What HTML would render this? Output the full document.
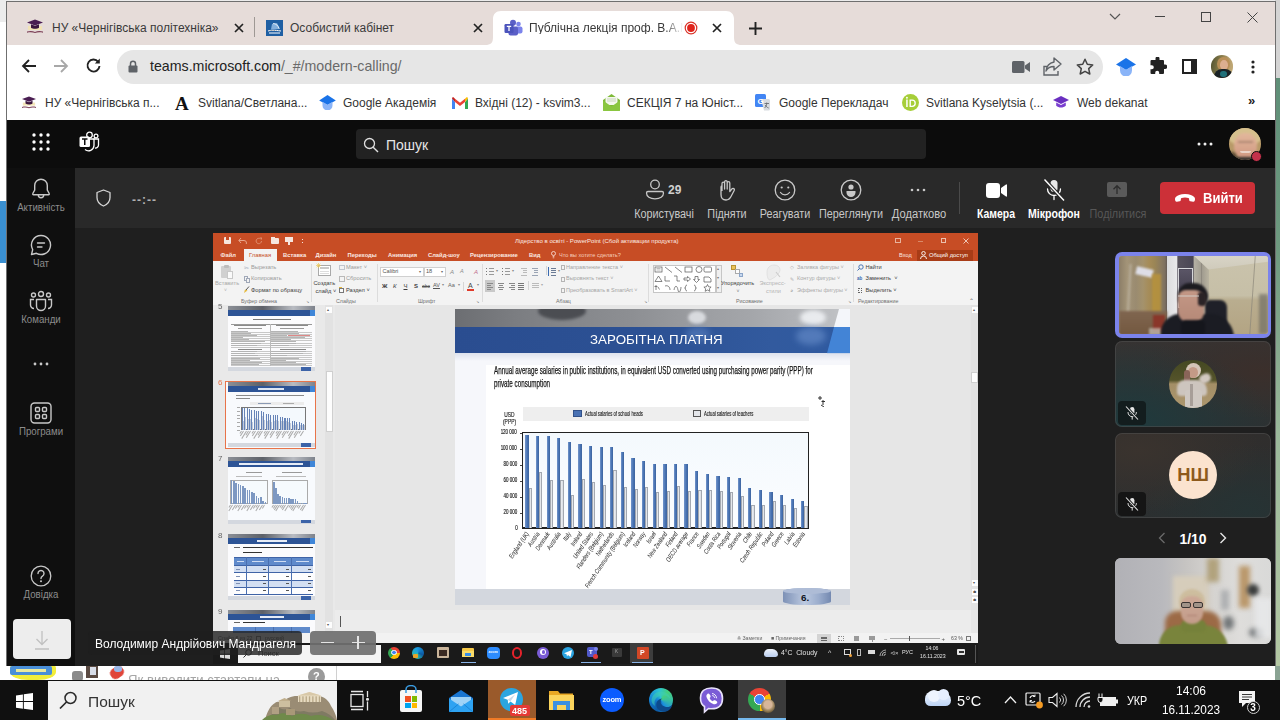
<!DOCTYPE html>
<html><head><meta charset="utf-8">
<style>
*{box-sizing:border-box;margin:0;padding:0}
html,body{width:1280px;height:720px;overflow:hidden;background:#fff;font-family:"Liberation Sans",sans-serif;}
.a{position:absolute}
.t{position:absolute;white-space:nowrap;line-height:1}
#win{left:7px;top:2px;width:1268px;height:664px;background:#fff;overflow:hidden;box-shadow:0 0 0 1px #6f6f6f}
#tabs{left:0;top:0;width:1268px;height:43px;background:#e6dcd9}
#tool{left:0;top:43px;width:1268px;height:40px;background:#fff}
#bm{left:0;top:83px;width:1268px;height:35px;background:#fff;z-index:2}
#teams{left:0;top:117px;width:1268px;height:547px;background:#1f1f1f}
#thead{left:0;top:0;width:1268px;height:49px;background:#0c0c0c}
#rail{left:0;top:49px;width:68px;height:498px;background:#0f0f0f}
#mbar{left:68px;top:49px;width:1200px;height:60px;background:#292929}
#stage{left:68px;top:109px;width:1200px;height:438px;background:#1f1f1f}
#task{left:0;top:680px;width:1280px;height:40px;background:#101010}

.lb{position:absolute;white-space:nowrap;line-height:1;transform:translateX(-50%) scaleX(.9);font-size:12px;color:#c8c8c8}
.rl{position:absolute;white-space:nowrap;line-height:1;transform:translateX(-50%) scaleX(.97);font-size:10px;color:#8c8c8c;left:34px}
</style></head><body>
<!-- desktop edges -->
<div class="a" style="left:0;top:0;width:1280px;height:22px;background:#ececec"></div>
<div class="a" style="left:0;top:201px;width:7px;height:62px;background:#3a8fd0"></div>
<div class="a" style="left:1275px;top:0;width:5px;height:78px;background:#d4d4d4"></div>
<div class="a" style="left:1275px;top:78px;width:5px;height:588px;background:linear-gradient(180deg,#5f8f78 0%,#6f9a80 30%,#9ab89a 60%,#b4c8a4 100%)"></div>

<div id="win" class="a">
  <div id="tabs" class="a">
    <!-- tab 1 -->
    <svg class="a" style="left:19px;top:17px" width="18" height="16" viewBox="0 0 18 16"><path d="M1 3.5 L9 0.5 L17 3.5 L9 6.5Z" fill="#4a1d52"/><path d="M5 5.5v3c2 1.6 6 1.6 8 0v-3l-4 1.6z" fill="#4a1d52"/><rect x="2" y="7" width="14" height="4" fill="#f3e3b0" opacity=".9"/><path d="M5 5.5v3.2c2 1.5 6 1.5 8 0V5.5l-4 1.6z" fill="#3b163f"/><path d="M1 12.5c3-1 6-.6 8 .4 2-1 5-1.4 8-.4v1.2c-3-.8-6-.6-8 .4-2-1-5-1.200-8-.4z" fill="#7a3d55"/></svg>
    <div class="t" style="left:45px;top:20px;font-size:12px;color:#3a3a3a">НУ «Чернігівська політехніка»</div>
    <svg class="a" style="left:227px;top:21px" width="10" height="10" viewBox="0 0 10 10"><path d="M1 1l8 8M9 1l-8 8" stroke="#222" stroke-width="1.7"/></svg>
    <div class="a" style="left:247px;top:15px;width:1px;height:20px;background:#9e9894"></div>
    <!-- tab 2 -->
    <svg class="a" style="left:259px;top:18px" width="17" height="16" viewBox="0 0 17 16"><rect width="17" height="16" fill="#1f5fa3"/><path d="M2 11c3-1 6-1 13 0M3 13h11" stroke="#fff" stroke-width="1"/><path d="M6 4l5-1 3 6-9 .5z" fill="#9cc3ea" opacity=".8"/><path d="M7 3.500c3 0 5 2 6 5" stroke="#fff" stroke-width=".8" fill="none"/></svg>
    <div class="t" style="left:283px;top:20px;font-size:12px;color:#3a3a3a">Особистий кабінет</div>
    <svg class="a" style="left:466px;top:21px" width="10" height="10" viewBox="0 0 10 10"><path d="M1 1l8 8M9 1l-8 8" stroke="#222" stroke-width="1.7"/></svg>
    <!-- active tab -->
    <svg class="a" style="left:478px;top:9px" width="258" height="34" viewBox="0 0 258 34"><path d="M0 34 C6 34 8 32 8 26 L8 8 C8 3 11 0 16 0 L241 0 C246 0 249 3 249 8 L249 26 C249 32 251 34 257 34 Z" fill="#fff"/></svg>
    <svg class="a" style="left:497px;top:17px" width="19" height="18" viewBox="0 0 19 18"><circle cx="14.500" cy="5" r="2.300" fill="#7b83eb"/><rect x="11" y="7.500" width="7.500" height="7" rx="2" fill="#7b83eb"/><circle cx="9" cy="3.800" r="3" fill="#5b5fc7"/><rect x="4.500" y="7.500" width="9.500" height="9" rx="2" fill="#5b5fc7"/><rect x="0.500" y="5" width="9" height="9" rx="1.200" fill="#4b53bc"/><path d="M2.800 7.300h4.400M5 7.300v4.800" stroke="#fff" stroke-width="1.300"/></svg>
    <div class="t" style="left:522px;top:20px;font-size:12px;color:#3a3a3a;width:154px;overflow:hidden;-webkit-mask-image:linear-gradient(90deg,#000 88%,transparent 100%)">Публічна лекція проф. В.А.Мандрагелі</div>
    <svg class="a" style="left:677px;top:19px" width="14" height="14" viewBox="0 0 14 14"><circle cx="7" cy="7" r="5.800" fill="none" stroke="#d93025" stroke-width="1.200"/><circle cx="7" cy="7" r="3.900" fill="#e0241b"/></svg>
    <svg class="a" style="left:705px;top:21px" width="10" height="10" viewBox="0 0 10 10"><path d="M1 1l8 8M9 1l-8 8" stroke="#222" stroke-width="1.700"/></svg>
    <svg class="a" style="left:742px;top:20px" width="13" height="13" viewBox="0 0 13 13"><path d="M6.500 0v13M0 6.500h13" stroke="#222" stroke-width="1.900"/></svg>
    <!-- window controls -->
    <svg class="a" style="left:1102px;top:11px" width="12" height="8" viewBox="0 0 12 8"><path d="M1 1l5 5 5-5" stroke="#555" stroke-width="1.200" fill="none"/></svg>
    <div class="a" style="left:1148px;top:14px;width:10px;height:1px;background:#444"></div>
    <div class="a" style="left:1194px;top:10px;width:10px;height:10px;border:1px solid #444"></div>
    <svg class="a" style="left:1240px;top:10px" width="11" height="11" viewBox="0 0 11 11"><path d="M.5.500l10 10M10.500.500l-10 10" stroke="#444" stroke-width="1"/></svg>
  </div>
  <div id="tool" class="a">
    <svg class="a" style="left:14px;top:13px" width="16" height="16" viewBox="0 0 16 16"><path d="M15 8H2M8 2L2 8l6 6" stroke="#222" stroke-width="1.800" fill="none"/></svg>
    <svg class="a" style="left:46px;top:13px" width="16" height="16" viewBox="0 0 16 16"><path d="M1 8h13M8 2l6 6-6 6" stroke="#a8a8a8" stroke-width="1.800" fill="none"/></svg>
    <svg class="a" style="left:78px;top:12px" width="17" height="17" viewBox="0 0 17 17"><path d="M13.200 4.800A6 6 0 1 0 14.500 9" stroke="#222" stroke-width="1.900" fill="none"/><path d="M14.800 1.500v5h-5z" fill="#222"/></svg>
    <div class="a" style="left:110px;top:5px;width:986px;height:33.500px;border-radius:17px;background:#e6e6e6"></div>
    <svg class="a" style="left:121px;top:15px" width="10" height="13" viewBox="0 0 10 13"><rect x="0.500" y="5.500" width="9" height="7" rx="1" fill="#5f6368"/><path d="M2.500 6V3.800a2.500 2.500 0 0 1 5 0V6" stroke="#5f6368" stroke-width="1.500" fill="none"/></svg>
    <div class="t" style="left:143px;top:14px;font-size:14.200px;color:#222">teams.microsoft.com<span style="color:#6a6a6a">/_#/modern-calling/</span></div>
    <svg class="a" style="left:1005px;top:16px" width="18" height="12" viewBox="0 0 18 12"><rect x="0" y="0" width="12.500" height="12" rx="1.500" fill="#5f6368"/><path d="M13 4.500L18 1v10l-5-3.500z" fill="#5f6368"/></svg>
    <svg class="a" style="left:1036px;top:12px" width="20" height="19" viewBox="0 0 20 19"><path d="M11 1l7 6-7 6V9.500C7 9.500 4.500 11 3 14c.5-5 3-8 8-9z" stroke="#5f6368" stroke-width="1.400" fill="none" stroke-linejoin="round"/><path d="M4 9.500H1V18h14v-4" stroke="#5f6368" stroke-width="1.400" fill="none"/></svg>
    <svg class="a" style="left:1069px;top:13px" width="18" height="17" viewBox="0 0 18 17"><path d="M9 1.300l2.300 5 5.400.6-4 3.700 1.100 5.400L9 13.300 4.200 16l1.100-5.400-4-3.700 5.400-.6z" stroke="#444" stroke-width="1.500" fill="none" stroke-linejoin="round"/></svg>
    <svg class="a" style="left:1109px;top:13px" width="20" height="18" viewBox="0 0 20 18"><path d="M10 0L0 6.500l10 5.500 10-5.500z" fill="#1a73e8"/><path d="M4 8v4.500a6 6 0 0 0 12 0V8l-6 3.800z" fill="#8ab4f8"/></svg>
    <svg class="a" style="left:1141px;top:12px" width="19" height="19" viewBox="0 0 19 19"><path d="M7.500 1.500a2 2 0 0 1 4 0V3H15a1 1 0 0 1 1 1v3.500h1a2 2 0 0 1 0 4.500h-1V16a1 1 0 0 1-1 1h-3.800v-1.300a2 2 0 0 0-4 0V17H3.500a1 1 0 0 1-1-1v-3.700h1.300a2 2 0 0 0 0-4H2.500V4a1 1 0 0 1 1-1h4z" fill="#222"/></svg>
    <div class="a" style="left:1175px;top:14px;width:15px;height:15px;border:2px solid #222;border-right-width:6px"></div>
    <div class="a" style="left:1203.500px;top:10px;width:22.500px;height:22.500px;border-radius:50%;overflow:hidden;background:linear-gradient(100deg,#4f5030 0%,#7d7444 35%,#b59c68 70%,#c4ad7c 100%)">
      <div class="a" style="left:6.500px;top:2px;width:13px;height:14px;border-radius:50%;background:#b98f58;filter:blur(.7px)"></div>
      <div class="a" style="left:9px;top:4.500px;width:8.500px;height:10px;border-radius:50%;background:#dcae90;filter:blur(.6px)"></div>
      <div class="a" style="left:3.500px;top:13.500px;width:19px;height:12px;border-radius:8px 8px 0 0;background:#1a2226;filter:blur(.7px)"></div>
      <div class="a" style="left:9.500px;top:16px;width:7px;height:6px;border-radius:3px;background:#1f7079;filter:blur(.7px)"></div>
    </div>
    <svg class="a" style="left:1244px;top:15px" width="4" height="14" viewBox="0 0 4 14"><circle cx="2" cy="2" r="1.600" fill="#222"/><circle cx="2" cy="7" r="1.600" fill="#222"/><circle cx="2" cy="12" r="1.600" fill="#222"/></svg>
  </div>
  <div id="bm" class="a">
    <svg class="a" style="left:14px;top:11px" width="16" height="14" viewBox="0 0 18 16"><path d="M1 3.500 L9 0.500 L17 3.500 L9 6.500Z" fill="#4a1d52"/><rect x="2" y="7.500" width="14" height="3.500" fill="#f3e3b0" opacity=".9"/><path d="M5 5.500v3.200c2 1.500 6 1.500 8 0V5.500l-4 1.600z" fill="#3b163f"/><path d="M1 12.500c3-1 6-.6 8 .4 2-1 5-1.400 8-.4v1.200c-3-.8-6-.6-8 .4-2-1-5-1.200-8-.4z" fill="#7a3d55"/></svg>
    <div class="t" style="left:38px;top:12px;font-size:12px;color:#333">НУ «Чернігівська п...</div>
    <div class="t" style="left:168px;top:9px;font-family:'Liberation Serif',serif;font-weight:bold;font-size:19px;color:#111">A</div>
    <div class="t" style="left:191px;top:12px;font-size:12px;color:#333">Svitlana/Светлана...</div>
    <svg class="a" style="left:312px;top:10px" width="17" height="15" viewBox="0 0 20 18"><path d="M10 0L0 6.500l10 5.500 10-5.500z" fill="#1a73e8"/><path d="M4 8v4.500a6 6 0 0 0 12 0V8l-6 3.800z" fill="#8ab4f8"/></svg>
    <div class="t" style="left:336px;top:12px;font-size:12px;color:#333">Google Академія</div>
    <svg class="a" style="left:445px;top:12px" width="16" height="12" viewBox="0 0 16 12"><path d="M0 1.500V12h3V5z" fill="#4285f4"/><path d="M16 1.500V12h-3V5z" fill="#34a853"/><path d="M0 1.500L3 5V1.800L1.800.500C1 .1 0 .6 0 1.500z" fill="#c5221f"/><path d="M16 1.500L13 5V1.800L14.200.500c.8-.4 1.800.1 1.800 1z" fill="#fbbc04"/><path d="M3 1.800L8 5.800l5-4V5L8 9 3 5z" fill="#ea4335"/></svg>
    <div class="t" style="left:468px;top:12px;font-size:12px;color:#333">Вхідні (12) - ksvim3...</div>
    <svg class="a" style="left:596px;top:9px" width="17" height="17" viewBox="0 0 17 17"><path d="M0 6l8.500-6L17 6v10a1 1 0 0 1-1 1H1a1 1 0 0 1-1-1z" fill="#7fba3a"/><rect x="2.500" y="3" width="12" height="8" fill="#f4f7ee"/><path d="M0 6.500l8.500 6 8.500-6V16a1 1 0 0 1-1 1H1a1 1 0 0 1-1-1z" fill="#8ac640"/><path d="M4 5h9M4 7h9" stroke="#b9c7a8" stroke-width=".7"/></svg>
    <div class="t" style="left:620px;top:12px;font-size:12px;color:#333">СЕКЦІЯ 7 на Юніст...</div>
    <svg class="a" style="left:748px;top:9px" width="17" height="17" viewBox="0 0 17 17"><rect x="0" y="0" width="11" height="13" rx="1.500" fill="#4285f4"/><path d="M6 5l7.500 0a1.500 1.500 0 0 1 1.500 1.500V15a1.500 1.500 0 0 1-1.500 1.500H9z" fill="#d7dbe0"/><text x="2.500" y="9.500" font-family="Liberation Sans" font-weight="bold" font-size="8" fill="#fff">G</text><path d="M9.500 9.500h4.500M11.700 8.500v1c0 2-1 3.500-2.200 4.500M10.300 11c.6 1.400 1.800 2.500 3.400 3" stroke="#5f6368" stroke-width=".8" fill="none"/></svg>
    <div class="t" style="left:772px;top:12px;font-size:12px;color:#333">Google Перекладач</div>
    <svg class="a" style="left:895px;top:9px" width="17" height="17" viewBox="0 0 17 17"><circle cx="8.500" cy="8.500" r="8.500" fill="#a6ce39"/><rect x="4.200" y="5.500" width="1.500" height="7.500" fill="#fff"/><circle cx="4.950" cy="3.800" r=".95" fill="#fff"/><path d="M7.500 5.500h2.600a3.750 3.750 0 0 1 0 7.500H7.500z M8.900 6.800v4.900h1.200a2.450 2.450 0 0 0 0-4.900z" fill="#fff" fill-rule="evenodd"/></svg>
    <div class="t" style="left:919px;top:12px;font-size:12px;color:#333">Svitlana Kyselytsia (...</div>
    <svg class="a" style="left:1046px;top:11px" width="16" height="13" viewBox="0 0 20 16"><path d="M10 0L0 5l10 5 10-5z" fill="#6a2fc0"/><path d="M4 8v4c3 3 9 3 12 0V8l-6 3z" fill="#7a3fd0"/></svg>
    <div class="t" style="left:1070px;top:12px;font-size:12px;color:#333">Web dekanat</div>
    <div class="t" style="left:1241px;top:9px;font-size:13px;font-weight:bold;color:#222">»</div>
  </div>
  <div id="teams" class="a">
    <div id="thead" class="a">
      <svg class="a" style="left:25px;top:14px" width="18" height="18" viewBox="0 0 18 18" fill="#fff"><circle cx="2" cy="2" r="1.700"/><circle cx="9" cy="2" r="1.700"/><circle cx="16" cy="2" r="1.700"/><circle cx="2" cy="9" r="1.700"/><circle cx="9" cy="9" r="1.700"/><circle cx="16" cy="9" r="1.700"/><circle cx="2" cy="16" r="1.700"/><circle cx="9" cy="16" r="1.700"/><circle cx="16" cy="16" r="1.700"/></svg>
      <svg class="a" style="left:72px;top:12px" width="21" height="21" viewBox="0 0 21 21"><circle cx="17" cy="5" r="1.900" fill="none" stroke="#fff" stroke-width="1.300"/><path d="M14.500 8h5v6a3 3 0 0 1-3.500 3" fill="none" stroke="#fff" stroke-width="1.300"/><circle cx="10.500" cy="4" r="2.800" fill="none" stroke="#fff" stroke-width="1.300"/><path d="M6 18.500a5.500 5.500 0 0 0 9-4V8h-4" fill="none" stroke="#fff" stroke-width="1.300"/><rect x="0.500" y="5.500" width="10.500" height="10.500" rx="1.500" fill="#fff"/><path d="M3 8h5.500M5.750 8v6" stroke="#0c0c0c" stroke-width="1.500"/></svg>
      <div class="a" style="left:349px;top:10px;width:570px;height:30px;border-radius:4px;background:#222"></div>
      <svg class="a" style="left:356px;top:18px" width="16" height="16" viewBox="0 0 16 16"><circle cx="6.500" cy="6.500" r="5" stroke="#e0e0e0" stroke-width="1.300" fill="none"/><path d="M10.200 10.200L15 15" stroke="#e0e0e0" stroke-width="1.400"/></svg>
      <div class="t" style="left:379px;top:19px;font-size:14px;color:#e6e6e6">Пошук</div>
      <svg class="a" style="left:1190px;top:22.500px" width="16" height="4" viewBox="0 0 16 4" fill="#f0f0f0"><circle cx="2" cy="2" r="1.500"/><circle cx="8" cy="2" r="1.500"/><circle cx="14" cy="2" r="1.500"/></svg>
      <div class="a" style="left:1222px;top:9px;width:32px;height:32px;border-radius:50%;overflow:hidden;background:#b89a68">
        <div class="a" style="left:-2px;top:-4px;width:36px;height:22px;border-radius:50%;background:#d6c08e;filter:blur(1.200px)"></div>
        <div class="a" style="left:5px;top:5px;width:23px;height:27px;border-radius:46% 46% 50% 50%;background:linear-gradient(180deg,#e2b79c,#cf9780);filter:blur(1px)"></div>
        <div class="a" style="left:9px;top:13px;width:15px;height:2px;background:#8a6a5a;opacity:.5;filter:blur(.8px)"></div>
        <div class="a" style="left:11px;top:22.500px;width:11px;height:2.500px;border-radius:0 0 6px 6px;background:#f2e4dc;opacity:.75;filter:blur(.6px)"></div>
        <div class="a" style="left:-3px;top:24px;width:11px;height:12px;border-radius:50%;background:#4a3a2c;filter:blur(1.500px)"></div>
        <div class="a" style="left:6px;top:29px;width:20px;height:6px;background:#3a3430;filter:blur(1.200px)"></div>
      </div>
      <div class="a" style="left:1244px;top:32px;width:11px;height:11px;border-radius:50%;background:#c4314b;border:1.500px solid #0c0c0c"></div>
    </div>
    <div id="rail" class="a">
      <svg class="a" style="left:24px;top:10px" width="20" height="22" viewBox="0 0 20 22"><path d="M10 1.200a6.300 6.300 0 0 0-6.300 6.300v4.500L1.800 15.500a.8.800 0 0 0 .7 1.200h15a.8.800 0 0 0 .7-1.200l-1.900-3.500V7.500A6.300 6.300 0 0 0 10 1.200z" fill="none" stroke="#c8c8c8" stroke-width="1.400"/><path d="M7.300 17a2.700 2.700 0 0 0 5.400 0" fill="none" stroke="#c8c8c8" stroke-width="1.400"/></svg>
      <div class="rl" style="top:35px">Активність</div>
      <svg class="a" style="left:23px;top:66px" width="22" height="22" viewBox="0 0 22 22"><path d="M11 1.500a9.500 9.500 0 0 0-8.300 14.100L1.500 20.500l4.900-1.200A9.500 9.500 0 1 0 11 1.500z" fill="none" stroke="#c8c8c8" stroke-width="1.400" stroke-linejoin="round"/><path d="M7.500 9h7M7.500 13h4.500" stroke="#c8c8c8" stroke-width="1.400" stroke-linecap="round"/></svg>
      <div class="rl" style="top:91px">Чат</div>
      <svg class="a" style="left:22px;top:122px" width="24" height="22" viewBox="0 0 24 22" fill="none" stroke="#c8c8c8" stroke-width="1.400"><circle cx="12" cy="4" r="2.500"/><circle cx="4.500" cy="5" r="2"/><circle cx="19.500" cy="5" r="2"/><path d="M7.500 9.500h9v6.500a4.500 4.500 0 0 1-9 0z" stroke-linejoin="round"/><path d="M5 9.500H1.500v5.500a3.500 3.500 0 0 0 3.500 3.500M19 9.500h3.500v5.500a3.500 3.500 0 0 1-3.500 3.500"/></svg>
      <div class="rl" style="top:147px">Команди</div>
      <svg class="a" style="left:26px;top:194px" width="16" height="4" viewBox="0 0 16 4" fill="#c8c8c8"><circle cx="2" cy="2" r="1.400"/><circle cx="8" cy="2" r="1.400"/><circle cx="14" cy="2" r="1.400"/></svg>
      <svg class="a" style="left:23px;top:234px" width="22" height="22" viewBox="0 0 22 22" fill="none" stroke="#c8c8c8" stroke-width="1.400"><rect x="1" y="1" width="20" height="20" rx="3.500"/><rect x="5.500" y="5.500" width="4" height="4" rx="1"/><rect x="12.500" y="5.500" width="4" height="4" rx="1"/><rect x="5.500" y="12.500" width="4" height="4" rx="1"/><rect x="12.500" y="12.500" width="4" height="4" rx="1"/></svg>
      <div class="rl" style="top:259px">Програми</div>
      <svg class="a" style="left:23px;top:397px" width="22" height="22" viewBox="0 0 22 22"><circle cx="11" cy="11" r="9.800" fill="none" stroke="#c8c8c8" stroke-width="1.300"/><path d="M8 8.500a3 3 0 1 1 4.500 2.600c-1 .6-1.500 1.200-1.500 2.400" fill="none" stroke="#c8c8c8" stroke-width="1.400" stroke-linecap="round"/><circle cx="11" cy="16.300" r="1" fill="#c8c8c8"/></svg>
      <div class="rl" style="top:422px">Довідка</div>
      <div class="a" style="left:6px;top:451px;width:58px;height:40px;border-radius:4px;background:#ededed"></div>
      <svg class="a" style="left:26px;top:462px" width="18" height="20" viewBox="0 0 18 20" fill="none" stroke="#c0c0c0" stroke-width="1.300"><path d="M9 1v13M3.500 9L9 14.500 14.500 9M2 19h14"/></svg>
    </div>
    <div id="mbar" class="a">
      <svg class="a" style="left:20.5px;top:21px" width="15" height="18" viewBox="0 0 15 18"><path d="M7.500 1L1 3.500v5c0 4 2.800 7 6.500 8.500 3.700-1.500 6.500-4.500 6.500-8.500v-5z" fill="none" stroke="#d6d6d6" stroke-width="1.300" stroke-linejoin="round"/></svg>
      <div class="t" style="left:57px;top:26px;font-size:12px;font-weight:bold;color:#b0b0b0;letter-spacing:1px">--:--</div>
      <!-- people -->
      <svg class="a" style="left:570px;top:11px" width="20" height="21" viewBox="0 0 20 21" fill="none" stroke="#c8c8c8" stroke-width="1.300"><circle cx="10" cy="5.500" r="4.300"/><path d="M3 12.500h14a1.500 1.500 0 0 1 1.500 1.500c0 3.500-3.500 5.800-8.500 5.800S1.500 17.500 1.500 14A1.500 1.500 0 0 1 3 12.500z"/></svg>
      <div class="t" style="left:593px;top:16px;font-size:12px;font-weight:bold;color:#d0d0d0">29</div>
      <div class="lb" style="left:589px;top:40px">Користувачі</div>
      <!-- hand -->
      <svg class="a" style="left:642px;top:11px" width="20" height="22" viewBox="0 0 20 22" fill="none" stroke="#c8c8c8" stroke-width="1.300" stroke-linejoin="round"><path d="M5 12V4.500a1.300 1.300 0 0 1 2.600 0V10 3a1.300 1.300 0 0 1 2.600 0v7-6a1.300 1.300 0 0 1 2.600 0v8.500l2.200-2.700a1.400 1.400 0 0 1 2.300 1.500L14 17.500c-1 2-2.500 3.500-5 3.500-3 0-5-2.200-5-5.500V8a1.200 1.200 0 0 1 1-1.200"/></svg>
      <div class="lb" style="left:652px;top:40px">Підняти</div>
      <!-- smiley -->
      <svg class="a" style="left:699px;top:11px" width="22" height="22" viewBox="0 0 22 22" fill="none" stroke="#c8c8c8" stroke-width="1.300"><circle cx="11" cy="11" r="9.800"/><circle cx="7.700" cy="8.500" r="1.100" fill="#c8c8c8" stroke="none"/><circle cx="14.300" cy="8.500" r="1.100" fill="#c8c8c8" stroke="none"/><path d="M6.500 13.500a5.500 5.500 0 0 0 9 0" stroke-linecap="round"/></svg>
      <div class="lb" style="left:709.5px;top:40px">Реагувати</div>
      <!-- view -->
      <svg class="a" style="left:764.5px;top:11px" width="22" height="22" viewBox="0 0 22 22"><circle cx="11" cy="11" r="9.800" fill="none" stroke="#c8c8c8" stroke-width="1.300"/><circle cx="11" cy="8" r="2.600" fill="#c8c8c8"/><path d="M6.500 12h9v1.500a4.500 4.500 0 0 1-9 0z" fill="#c8c8c8"/></svg>
      <div class="lb" style="left:775.5px;top:40px">Переглянути</div>
      <!-- more -->
      <svg class="a" style="left:835px;top:19.5px" width="16" height="4" viewBox="0 0 16 4" fill="#c8c8c8"><circle cx="2" cy="2" r="1.300"/><circle cx="8" cy="2" r="1.300"/><circle cx="14" cy="2" r="1.300"/></svg>
      <div class="lb" style="left:843.5px;top:40px;transform:translateX(-50%) scaleX(.93)">Додатково</div>
      <div class="a" style="left:884px;top:14px;width:1px;height:32px;background:#4a4a4a"></div>
      <!-- camera -->
      <svg class="a" style="left:910.5px;top:14.5px" width="21" height="15" viewBox="0 0 21 15"><rect x="0" y="0" width="14" height="15" rx="3" fill="#fff"/><path d="M15 5l5-3.500a.6.600 0 0 1 1 .5v11a.6.600 0 0 1-1 .5L15 10z" fill="#fff"/></svg>
      <div class="lb" style="left:920.5px;top:40px;color:#fff;font-weight:bold;transform:translateX(-50%) scaleX(.87)">Камера</div>
      <!-- mic -->
      <svg class="a" style="left:967px;top:10px" width="24" height="24" viewBox="0 0 24 24" fill="none" stroke="#fff" stroke-width="1.300"><rect x="8.500" y="2" width="7" height="12" rx="3.500" fill="#e8e8e8" stroke="none"/><path d="M5.500 11a6.500 6.500 0 0 0 13 0M12 17.500V21.500" stroke-linecap="round"/><path d="M2.500 1.500l19.500 21" stroke="#292929" stroke-width="3.500"/><path d="M2.500 1.500l19.500 21" stroke-width="1.400"/></svg>
      <div class="lb" style="left:979px;top:40px;color:#fff;font-weight:bold;transform:translateX(-50%) scaleX(.88)">Мікрофон</div>
      <!-- share -->
      <svg class="a" style="left:1032px;top:14px" width="20" height="15" viewBox="0 0 20 15"><rect width="20" height="15" rx="2" fill="#5a5a5a"/><path d="M10 12V4M6.500 7.200L10 3.700l3.500 3.500" stroke="#2c2c2c" stroke-width="1.300" fill="none"/></svg>
      <div class="lb" style="left:1042.5px;top:40px;color:#575757">Поділитися</div>
      <!-- leave -->
      <div class="a" style="left:1085px;top:14px;width:95px;height:32px;border-radius:4px;background:#cc3038"></div>
      <svg class="a" style="left:1099.5px;top:26px" width="20" height="9" viewBox="0 0 20 9"><path d="M10 0C5.500 0 2 1.300.6 3.200c-.8 1-.7 2.400-.3 3.600.2.700.9 1.100 1.600 1l2.600-.5c.7-.1 1.200-.7 1.300-1.400l.2-1.700c2.500-.9 5.500-.9 8 0l.2 1.700c.1.700.6 1.300 1.300 1.400l2.600.5c.7.100 1.400-.3 1.600-1 .4-1.200.5-2.600-.3-3.600C18 1.300 14.500 0 10 0z" fill="#fff"/></svg>
      <div class="t" style="left:1128px;top:23px;font-size:14px;font-weight:bold;color:#fff;transform-origin:0 0;transform:scaleX(.93)">Вийти</div>
    </div>
    <div id="stage" class="a">
<!--PPT-->
<div id="ppt" class="a" style="left:138px;top:5px;width:765px;height:431px;background:#e6e6e6;overflow:hidden">
<div class="a" style="left:0;top:0;width:765px;height:431px;filter:blur(.42px)">
<div class="a" style="left:0px;top:0px;width:765px;height:28px;background:#c74d25;"></div>
<div class="a" style="left:11px;top:4px;width:7px;height:7px;background:#f6e6de;border-radius:1px"></div>
<div class="a" style="left:13px;top:4px;width:3px;height:2.5px;background:#c74d25;"></div>
<svg class="a" style="left:25px;top:4px" width="10" height="7" viewBox="0 0 10 7"><path d="M1 3.500h5a2.500 2.500 0 0 1 0 5M3 1L.8 3.500 3 6" stroke="#e9a58a" fill="none" stroke-width="1"/></svg>
<svg class="a" style="left:42px;top:3.5px" width="8" height="8" viewBox="0 0 8 8"><path d="M6.500 4a2.700 2.700 0 1 1-1-2.100" stroke="#e08d6c" fill="none" stroke-width="1"/><path d="M4.500.500h2.500v2.500z" fill="#e08d6c"/></svg>
<div class="a" style="left:58px;top:5px;width:8px;height:6px;background:#f6e6de;border-radius:1px"></div>
<div class="a" style="left:58px;top:4px;width:4px;height:1.5px;background:#f6e6de;"></div>
<div class="a" style="left:71.5px;top:3.5px;width:8px;height:5px;background:#f6e6de;"></div>
<div class="a" style="left:74.5px;top:8.5px;width:2px;height:3px;background:#f6e6de;"></div>
<div class="a" style="left:89px;top:6px;width:1px;height:1px;background:#f6e6de;"></div>
<div class="a" style="left:89px;top:8.5px;width:1px;height:1px;background:#f6e6de;"></div>
<div class="t" style="left:302px;top:4.86px;font-size:6.05px;color:#fbe9e2;">Лідерство в освіті - PowerPoint (Сбой активации продукта)</div>
<div class="a" style="left:682px;top:5px;width:6px;height:4.5px;background:transparent;border:1px solid #e8b39d"></div>
<div class="a" style="left:705px;top:8px;width:5px;height:1px;background:#d98a6a;"></div>
<div class="a" style="left:728px;top:5px;width:5px;height:5px;background:transparent;border:1px solid #ecc0ad"></div>
<svg class="a" style="left:750px;top:4.5px" width="6" height="6" viewBox="0 0 6 6"><path d="M.5.500l5 5M5.500.500l-5 5" stroke="#efc7b6" stroke-width="1"/></svg>
<div class="a" style="left:31px;top:16px;width:33px;height:12px;background:#f3f3f3;"></div>
<div class="t" style="left:7.5px;top:19.57px;font-size:5.8px;color:#fbe9e2;font-weight:bold">Файл</div>
<div class="t" style="left:36px;top:19.57px;font-size:5.8px;color:#c74d25;">Главная</div>
<div class="t" style="left:70px;top:19.57px;font-size:5.8px;color:#fbe9e2;font-weight:bold">Вставка</div>
<div class="t" style="left:102.5px;top:19.57px;font-size:5.8px;color:#fbe9e2;font-weight:bold">Дизайн</div>
<div class="t" style="left:134.5px;top:19.57px;font-size:5.8px;color:#fbe9e2;font-weight:bold">Переходы</div>
<div class="t" style="left:175px;top:19.57px;font-size:5.8px;color:#fbe9e2;font-weight:bold">Анимация</div>
<div class="t" style="left:215px;top:19.57px;font-size:5.8px;color:#fbe9e2;font-weight:bold">Слайд-шоу</div>
<div class="t" style="left:257px;top:19.57px;font-size:5.8px;color:#fbe9e2;font-weight:bold">Рецензирование</div>
<div class="t" style="left:316px;top:19.57px;font-size:5.8px;color:#fbe9e2;font-weight:bold">Вид</div>
<svg class="a" style="left:338px;top:18px" width="5" height="8" viewBox="0 0 5 8"><circle cx="2.500" cy="2.500" r="2" stroke="#fbe9e2" fill="none" stroke-width=".8"/><path d="M1.700 5.500h1.600M1.700 6.800h1.600" stroke="#fbe9e2" stroke-width=".7"/></svg>
<div class="t" style="left:346px;top:19.67px;font-size:5.6px;color:#f6cdbd;">Что вы хотите сделать?</div>
<div class="t" style="left:686px;top:19.67px;font-size:5.6px;color:#fbe9e2;">Вход</div>
<div class="a" style="left:704px;top:17px;width:56px;height:11px;background:#a83c17;"></div>
<svg class="a" style="left:707px;top:18px" width="7" height="8" viewBox="0 0 7 8"><circle cx="3.500" cy="2.300" r="1.800" stroke="#fff" fill="none" stroke-width=".9"/><path d="M.5 8a3 3 0 0 1 6 0" stroke="#fff" fill="none" stroke-width=".9"/></svg>
<div class="t" style="left:716px;top:19.77px;font-size:5.8px;color:#fff;">Общий доступ</div>
<div class="a" style="left:0px;top:28px;width:765px;height:44px;background:#f3f3f3;"></div>
<div class="a" style="left:0px;top:71.5px;width:765px;height:1px;background:#d8d8d8;"></div>
<div class="a" style="left:8px;top:33px;width:10px;height:12px;background:#d0d0d0;border-radius:1px"></div>
<div class="a" style="left:10.5px;top:31.5px;width:5px;height:3px;background:#bcbcbc;border-radius:1px"></div>
<div class="a" style="left:14px;top:38px;width:6px;height:8px;background:#fafafa;border:.5px solid #c8c8c8"></div>
<div class="t" style="left:2px;top:48.32px;font-size:5.7px;color:#a8a8a8;">Вставить</div>
<div class="t" style="left:11px;top:55.15px;font-size:5px;color:#b0b0b0;">˅</div>
<div class="t" style="left:31px;top:31.68px;font-size:6px;color:#9fa8b8;">✂</div>
<div class="t" style="left:38px;top:31.82px;font-size:5.7px;color:#9a9a9a;">Вырезать</div>
<div class="a" style="left:30.5px;top:43px;width:4px;height:5px;background:transparent;border:.6px solid #a0a8b8"></div>
<div class="a" style="left:32.5px;top:45px;width:4px;height:5px;background:#f3f3f3;border:.6px solid #a0a8b8"></div>
<div class="t" style="left:38px;top:43.32px;font-size:5.7px;color:#9a9a9a;">Копировать</div>
<svg class="a" style="left:30px;top:53px" width="7" height="8" viewBox="0 0 7 8"><path d="M6 .5L3 4" stroke="#555" stroke-width="1"/><path d="M1 7l1-3.500 2.500 1z" fill="#e5b93c"/></svg>
<div class="t" style="left:38px;top:54.62px;font-size:5.7px;color:#3c3c3c;">Формат по образцу</div>
<div class="t" style="left:28px;top:65.71px;font-size:5.3px;color:#707070;">Буфер обмена</div>
<div class="t" style="left:93px;top:66.62px;font-size:4px;color:#888;">↘</div>
<div class="a" style="left:98px;top:31px;width:1px;height:38px;background:#dcdcdc;"></div>
<div class="a" style="left:105px;top:32px;width:13px;height:11px;background:#fff;border:.7px solid #a9a9a9"></div>
<div class="a" style="left:107px;top:34px;width:9px;height:2px;background:#c9c9c9;"></div>
<div class="a" style="left:107px;top:37.5px;width:9px;height:1px;background:#ddd;"></div>
<div class="a" style="left:107px;top:39.5px;width:9px;height:1px;background:#ddd;"></div>
<svg class="a" style="left:103px;top:30px" width="5" height="5" viewBox="0 0 5 5"><path d="M2.500 0v5M0 2.500h5M.7.700l3.600 3.600M4.300.700L.7 4.300" stroke="#e8c55a" stroke-width=".7"/></svg>
<div class="t" style="left:100.5px;top:48.12px;font-size:5.7px;color:#3c3c3c;">Создать</div>
<div class="t" style="left:102.5px;top:56.12px;font-size:5.7px;color:#3c3c3c;">слайд ˅</div>
<div class="a" style="left:125.5px;top:31.5px;width:6px;height:5.5px;background:transparent;border:.5px solid #c0c5ce"></div>
<div class="t" style="left:133px;top:31.62px;font-size:5.7px;color:#9a9a9a;">Макет ˅</div>
<div class="a" style="left:125.5px;top:43px;width:6px;height:5.5px;background:transparent;border:.5px solid #b8b8b8"></div>
<div class="t" style="left:133px;top:43.32px;font-size:5.7px;color:#9a9a9a;">Сбросить</div>
<div class="a" style="left:126px;top:55px;width:5px;height:5px;background:#fafafa;border:.6px solid #777"></div>
<div class="a" style="left:125.5px;top:54px;width:3px;height:1.2px;background:#e5b93c;"></div>
<div class="t" style="left:133px;top:54.62px;font-size:5.7px;color:#3c3c3c;">Раздел ˅</div>
<div class="t" style="left:123px;top:65.71px;font-size:5.3px;color:#707070;">Слайды</div>
<div class="a" style="left:164px;top:31px;width:1px;height:38px;background:#dcdcdc;"></div>
<div class="a" style="left:167px;top:33.5px;width:43.5px;height:10px;background:#fff;border:.5px solid #d0d0d0"></div>
<div class="t" style="left:169.5px;top:36.07px;font-size:5.6px;color:#555;">Calibri</div>
<div class="t" style="left:206px;top:36.62px;font-size:4px;color:#666;">▾</div>
<div class="a" style="left:211px;top:33.5px;width:22px;height:10px;background:#fff;border:.5px solid #d0d0d0"></div>
<div class="t" style="left:213px;top:36.07px;font-size:5.6px;color:#555;">18</div>
<div class="t" style="left:228px;top:36.62px;font-size:4px;color:#666;">▾</div>
<div class="t" style="left:237px;top:35.68px;font-size:6px;color:#888;font-style:italic">A</div>
<div class="t" style="left:247px;top:35.91px;font-size:5.5px;color:#888;font-style:italic">A</div>
<div class="t" style="left:261px;top:35.68px;font-size:6px;color:#c06a8a;font-style:italic">A</div>
<div class="t" style="left:169px;top:50.18px;font-size:6px;color:#3c3c3c;font-weight:bold">Ж</div>
<div class="t" style="left:180px;top:50.18px;font-size:6px;color:#3c3c3c;font-style:italic">К</div>
<div class="t" style="left:190.5px;top:50.18px;font-size:6px;color:#3c3c3c;text-decoration:underline">Ч</div>
<div class="t" style="left:201px;top:50.18px;font-size:6px;color:#3c3c3c;font-weight:bold">S</div>
<div class="t" style="left:209px;top:50.95px;font-size:5px;color:#555;text-decoration:line-through">abc</div>
<div class="t" style="left:220px;top:49.91px;font-size:5.5px;color:#555;text-decoration:underline">AV</div>
<div class="t" style="left:229px;top:51.35px;font-size:3.5px;color:#888;">▾</div>
<div class="t" style="left:235px;top:50.37px;font-size:5.6px;color:#666;">Aa</div>
<div class="t" style="left:245px;top:51.35px;font-size:3.5px;color:#888;">▾</div>
<div class="a" style="left:249.5px;top:49px;width:0.7px;height:9px;background:#d5d5d5;"></div>
<div class="t" style="left:255px;top:49.01px;font-size:7px;color:#444;">A</div>
<div class="a" style="left:253.5px;top:56px;width:7px;height:1.6px;background:#e03a2a;"></div>
<div class="t" style="left:264px;top:51.35px;font-size:3.5px;color:#888;">▾</div>
<div class="t" style="left:205px;top:65.71px;font-size:5.3px;color:#707070;">Шрифт</div>
<div class="t" style="left:263px;top:66.62px;font-size:4px;color:#888;">↘</div>
<div class="a" style="left:269px;top:31px;width:1px;height:38px;background:#dcdcdc;"></div>
<div class="a" style="left:273px;top:35px;width:1.2px;height:1.2px;background:#777;"></div>
<div class="a" style="left:275.5px;top:35.3px;width:5px;height:0.8px;background:#999;"></div>
<div class="a" style="left:273px;top:38px;width:1.2px;height:1.2px;background:#777;"></div>
<div class="a" style="left:275.5px;top:38.3px;width:5px;height:0.8px;background:#999;"></div>
<div class="a" style="left:273px;top:41px;width:1.2px;height:1.2px;background:#777;"></div>
<div class="a" style="left:275.5px;top:41.3px;width:5px;height:0.8px;background:#999;"></div>
<div class="a" style="left:289px;top:35px;width:1.2px;height:1.2px;background:#777;"></div>
<div class="a" style="left:291.5px;top:35.3px;width:5px;height:0.8px;background:#999;"></div>
<div class="a" style="left:289px;top:38px;width:1.2px;height:1.2px;background:#777;"></div>
<div class="a" style="left:291.5px;top:38.3px;width:5px;height:0.8px;background:#999;"></div>
<div class="a" style="left:289px;top:41px;width:1.2px;height:1.2px;background:#777;"></div>
<div class="a" style="left:291.5px;top:41.3px;width:5px;height:0.8px;background:#999;"></div>
<div class="t" style="left:283px;top:36.85px;font-size:3.5px;color:#888;">▾</div>
<div class="t" style="left:299px;top:36.85px;font-size:3.5px;color:#888;">▾</div>
<div class="a" style="left:308px;top:35.0px;width:6px;height:0.8px;background:#bbb;"></div>
<div class="a" style="left:310px;top:37.2px;width:4px;height:0.8px;background:#bbb;"></div>
<div class="a" style="left:310px;top:39.4px;width:4px;height:0.8px;background:#bbb;"></div>
<div class="a" style="left:308px;top:41.6px;width:6px;height:0.8px;background:#bbb;"></div>
<div class="a" style="left:319px;top:35.0px;width:6px;height:0.8px;background:#9aa4b4;"></div>
<div class="a" style="left:321px;top:37.2px;width:4px;height:0.8px;background:#9aa4b4;"></div>
<div class="a" style="left:321px;top:39.4px;width:4px;height:0.8px;background:#9aa4b4;"></div>
<div class="a" style="left:319px;top:41.6px;width:6px;height:0.8px;background:#9aa4b4;"></div>
<div class="a" style="left:332.5px;top:33px;width:0.7px;height:9px;background:#d5d5d5;"></div>
<div class="a" style="left:338px;top:34.5px;width:5px;height:0.9px;background:#6a7a94;"></div>
<div class="a" style="left:338px;top:36.9px;width:5px;height:0.9px;background:#6a7a94;"></div>
<div class="a" style="left:338px;top:39.3px;width:5px;height:0.9px;background:#6a7a94;"></div>
<div class="a" style="left:338px;top:41.7px;width:5px;height:0.9px;background:#6a7a94;"></div>
<div class="a" style="left:334.5px;top:34px;width:1px;height:9px;background:#3a6ab0;"></div>
<div class="t" style="left:345px;top:36.85px;font-size:3.5px;color:#888;">▾</div>
<div class="a" style="left:271.5px;top:47px;width:10.5px;height:12px;background:#c9c9c9;"></div>
<div class="a" style="left:274px;top:49.5px;width:6px;height:0.8px;background:#888;"></div>
<div class="a" style="left:274px;top:51.5px;width:4px;height:0.8px;background:#888;"></div>
<div class="a" style="left:274px;top:53.5px;width:6px;height:0.8px;background:#888;"></div>
<div class="a" style="left:274px;top:55.5px;width:4px;height:0.8px;background:#888;"></div>
<div class="a" style="left:285.0px;top:49.5px;width:6px;height:0.8px;background:#888;"></div>
<div class="a" style="left:286.0px;top:51.5px;width:4px;height:0.8px;background:#888;"></div>
<div class="a" style="left:285.0px;top:53.5px;width:6px;height:0.8px;background:#888;"></div>
<div class="a" style="left:286.0px;top:55.5px;width:4px;height:0.8px;background:#888;"></div>
<div class="a" style="left:295.5px;top:49.5px;width:6px;height:0.8px;background:#888;"></div>
<div class="a" style="left:297.5px;top:51.5px;width:4px;height:0.8px;background:#888;"></div>
<div class="a" style="left:295.5px;top:53.5px;width:6px;height:0.8px;background:#888;"></div>
<div class="a" style="left:297.5px;top:55.5px;width:4px;height:0.8px;background:#888;"></div>
<div class="a" style="left:305px;top:49.5px;width:6px;height:0.8px;background:#777;"></div>
<div class="a" style="left:305px;top:51.5px;width:6px;height:0.8px;background:#777;"></div>
<div class="a" style="left:305px;top:53.5px;width:6px;height:0.8px;background:#777;"></div>
<div class="a" style="left:305px;top:55.5px;width:6px;height:0.8px;background:#777;"></div>
<div class="a" style="left:314.5px;top:48px;width:0.7px;height:9px;background:#d5d5d5;"></div>
<div class="a" style="left:319px;top:50.0px;width:7px;height:0.8px;background:#bbb;"></div>
<div class="a" style="left:319px;top:52.2px;width:7px;height:0.8px;background:#bbb;"></div>
<div class="a" style="left:319px;top:54.4px;width:7px;height:0.8px;background:#bbb;"></div>
<div class="t" style="left:328px;top:51.35px;font-size:3.5px;color:#aaa;">▾</div>
<div class="t" style="left:353px;top:31.91px;font-size:5.5px;color:#a4a4a4;">Направление текста ˅</div>
<div class="a" style="left:348px;top:32px;width:4px;height:5px;background:transparent;border:.5px solid #b5b5b5"></div>
<div class="t" style="left:353px;top:43.41px;font-size:5.5px;color:#a4a4a4;">Выровнять текст ˅</div>
<div class="a" style="left:348px;top:43.5px;width:4px;height:5px;background:transparent;border:.5px solid #b5b5b5"></div>
<div class="t" style="left:353px;top:54.71px;font-size:5.5px;color:#a4a4a4;">Преобразовать в SmartArt ˅</div>
<div class="a" style="left:348px;top:55px;width:4px;height:4.5px;background:transparent;border:.5px solid #b5b5b5"></div>
<div class="t" style="left:343px;top:65.71px;font-size:5.3px;color:#707070;">Абзац</div>
<div class="t" style="left:431px;top:66.62px;font-size:4px;color:#888;">↘</div>
<div class="a" style="left:435px;top:31px;width:1px;height:38px;background:#dcdcdc;"></div>
<div class="a" style="left:439.5px;top:31.5px;width:63px;height:28px;background:#fff;border:.5px solid #c6c6c6"></div>
<div class="a" style="left:502.5px;top:31.5px;width:6px;height:28px;background:#f0f0f0;border:.5px solid #c6c6c6"></div>
<svg class="a" style="left:440px;top:32px" width="62" height="27" viewBox="0 0 62 27" fill="none" stroke="#555" stroke-width=".7"><rect x="2" y="2" width="7" height="5"/><path d="M3.500 3.500h4M3.500 5h4" stroke-width=".4"/><path d="M12 2l7 5.500M22 2l7 5.500"/><rect x="32" y="2" width="7" height="5"/><circle cx="46" cy="4.500" r="3"/><rect x="51" y="2" width="7.500" height="5" rx="1.200"/><path d="M2 16.500l3.500-5.500 3.500 5.500z"/><path d="M12 11v5h5M21 11h3v5h3"/><path d="M31 13h3.500v-1.500l3 2.500-3 2.500v-1.500H31z"/><path d="M42 11.500h3v3h1.500l-3 3-3-3H42z"/><path d="M51 12h5l2 2v3h-7z"/><path d="M3 20v5M1.500 21.500h3M5 22l1.500 2.500"/><path d="M12 21c3-1 5 1 5 4M21 25c1-5 3-5 4 0s3 0 3-3"/><path d="M34 20c-1.500 0-1.500 2-1.500 2.500s-1 .5-1 .5 1 0 1 .5 0 2.500 1.500 2.500M41 20c1.500 0 1.500 2 1.500 2.500s1 .5 1 .5-1 0-1 .5 0 2.500-1.500 2.500"/><path d="M54.500 19.500l1.100 2.300 2.500.3-1.800 1.700.5 2.500-2.300-1.300-2.300 1.300.5-2.500-1.800-1.700 2.500-.3z"/></svg>
<div class="t" style="left:503.5px;top:33.62px;font-size:4px;color:#777;">▴</div>
<div class="t" style="left:503.5px;top:42.62px;font-size:4px;color:#777;">▾</div>
<div class="t" style="left:503.5px;top:52.62px;font-size:4px;color:#777;">▾</div>
<div class="a" style="left:518px;top:32px;width:5px;height:5px;background:#e9c25b;border:.5px solid #b99433"></div>
<div class="a" style="left:521.5px;top:35.5px;width:5.5px;height:5.5px;background:#fdfdfd;border:.5px solid #aaa"></div>
<div class="a" style="left:525.5px;top:39.5px;width:4px;height:4px;background:#c8d8ee;border:.5px solid #8aa4c8"></div>
<div class="t" style="left:508px;top:48.17px;font-size:5.6px;color:#3c3c3c;">Упорядочить</div>
<div class="t" style="left:523.5px;top:55.65px;font-size:5px;color:#777;">˅</div>
<svg class="a" style="left:552px;top:31px" width="17" height="17" viewBox="0 0 17 17"><path d="M2 8c0-4 3-7 7-7s6 2 6 5-3 5-5 7l-5 3c-2 0-3-3-3-8z" fill="#ececec" stroke="#d6d6d6" stroke-width=".6"/><path d="M11 8l4 5" stroke="#ccc" stroke-width="1.200"/></svg>
<div class="t" style="left:546.5px;top:48.17px;font-size:5.6px;color:#b4b4b4;">Экспресс-</div>
<div class="t" style="left:553px;top:55.87px;font-size:5.6px;color:#b4b4b4;">стили</div>
<div class="t" style="left:577px;top:31.95px;font-size:5px;color:#b0b0b0;">◇</div>
<div class="t" style="left:584px;top:31.91px;font-size:5.5px;color:#a9a9a9;">Заливка фигуры ˅</div>
<div class="t" style="left:577px;top:43.65px;font-size:5px;color:#b0b0b0;">✎</div>
<div class="t" style="left:584px;top:43.41px;font-size:5.5px;color:#a9a9a9;">Контур фигуры ˅</div>
<div class="t" style="left:577px;top:54.95px;font-size:5px;color:#b0b0b0;">◕</div>
<div class="t" style="left:584px;top:54.71px;font-size:5.5px;color:#a9a9a9;">Эффекты фигуры ˅</div>
<div class="t" style="left:523px;top:65.71px;font-size:5.3px;color:#707070;">Рисование</div>
<div class="t" style="left:635px;top:66.62px;font-size:4px;color:#888;">↘</div>
<div class="a" style="left:639.5px;top:31px;width:1px;height:38px;background:#dcdcdc;"></div>
<svg class="a" style="left:644px;top:31px" width="7" height="7" viewBox="0 0 7 7"><circle cx="4" cy="3" r="2.200" stroke="#3a6ab0" fill="none" stroke-width=".9"/><path d="M2.500 4.500L.5 6.500" stroke="#3a6ab0" stroke-width="1"/></svg>
<div class="t" style="left:652.5px;top:31.62px;font-size:5.7px;color:#3c3c3c;">Найти</div>
<div class="t" style="left:644px;top:43.88px;font-size:4.5px;color:#3a6ab0;font-weight:bold">ab</div>
<div class="t" style="left:652.5px;top:43.32px;font-size:5.7px;color:#3c3c3c;">Заменить&nbsp;&nbsp;˅</div>
<div class="a" style="left:644.5px;top:54.5px;width:4px;height:5px;background:transparent;border:.6px dotted #666"></div>
<div class="t" style="left:652.5px;top:54.62px;font-size:5.7px;color:#3c3c3c;">Выделить ˅</div>
<div class="t" style="left:645px;top:65.71px;font-size:5.3px;color:#707070;">Редактирование</div>
<div class="t" style="left:756px;top:65.18px;font-size:6px;color:#666;">⌃</div>
<div class="a" style="left:0px;top:72px;width:122px;height:329px;background:#e9e9e9;"></div>
<div class="a" style="left:121.5px;top:72px;width:1px;height:329px;background:#d0d0d0;"></div>
<div class="a" style="left:112px;top:72px;width:8px;height:329px;background:#e2e2e2;"></div>
<div class="a" style="left:113px;top:74px;width:6px;height:6px;background:#fdfdfd;"></div>
<div class="t" style="left:114.2px;top:75.0px;font-size:4px;color:#555;">▴</div>
<div class="a" style="left:112.5px;top:138px;width:7px;height:61px;background:#fdfdfd;border:.5px solid #cfcfcf"></div>
<div class="a" style="left:113px;top:389px;width:6px;height:6px;background:#fdfdfd;"></div>
<div class="t" style="left:114.2px;top:390.0px;font-size:4px;color:#555;">▾</div>
<div class="a" style="left:14.5px;top:72.5px;width:87px;height:65.5px;background:#fbfbfd;"></div>
<div class="a" style="left:14.5px;top:72.5px;width:87px;height:4px;background:linear-gradient(90deg,#8b8f96,#5d6168 40%,#b9bcc2 75%,#7e838c);"></div>
<div class="a" style="left:14.5px;top:76.5px;width:87px;height:6px;background:#2d5496;"></div>
<div class="a" style="left:96.5px;top:76.5px;width:5px;height:6px;background:#3f86d8;"></div>
<div class="a" style="left:39.5px;top:86.0px;width:38px;height:1.3px;background:#777;"></div>
<div class="a" style="left:17.5px;top:90.5px;width:81px;height:0.6px;background:#999;"></div>
<div class="a" style="left:20.5px;top:92.0px;width:32px;height:1px;background:#8a8a8a;"></div>
<div class="a" style="left:62.5px;top:92.0px;width:32px;height:1px;background:#8a8a8a;"></div>
<div class="a" style="left:24.5px;top:94.5px;width:24px;height:1px;background:#999;"></div>
<div class="a" style="left:66.5px;top:94.5px;width:24px;height:1px;background:#999;"></div>
<div class="a" style="left:17.5px;top:99.1px;width:81px;height:0.35px;background:#c8c8c8;"></div>
<div class="a" style="left:18.0px;top:97.5px;width:17.235221796021612px;height:0.8px;background:#b4b4b4;"></div>
<div class="a" style="left:58.0px;top:97.5px;width:27.061501407102845px;height:0.8px;background:#b4b4b4;"></div>
<div class="a" style="left:17.5px;top:101.18px;width:81px;height:0.35px;background:#c8c8c8;"></div>
<div class="a" style="left:18.0px;top:99.58px;width:20.139013664057742px;height:0.8px;background:#b4b4b4;"></div>
<div class="a" style="left:58.0px;top:99.58px;width:28.49408092630867px;height:0.8px;background:#b4b4b4;"></div>
<div class="a" style="left:17.5px;top:103.26px;width:81px;height:0.35px;background:#c8c8c8;"></div>
<div class="a" style="left:18.0px;top:101.66px;width:25.765846690377188px;height:0.8px;background:#b4b4b4;"></div>
<div class="a" style="left:58.0px;top:101.66px;width:15.572692621755515px;height:0.8px;background:#b4b4b4;"></div>
<div class="a" style="left:17.5px;top:105.34px;width:81px;height:0.35px;background:#c8c8c8;"></div>
<div class="a" style="left:18.0px;top:103.74px;width:12.289695814207231px;height:0.8px;background:#b4b4b4;"></div>
<div class="a" style="left:58.0px;top:103.74px;width:34.09925797031504px;height:0.8px;background:#b4b4b4;"></div>
<div class="a" style="left:17.5px;top:107.42px;width:81px;height:0.35px;background:#c8c8c8;"></div>
<div class="a" style="left:18.0px;top:105.82px;width:17.705788315216168px;height:0.8px;background:#b4b4b4;"></div>
<div class="a" style="left:58.0px;top:105.82px;width:19.623943065120713px;height:0.8px;background:#b4b4b4;"></div>
<div class="a" style="left:17.5px;top:109.5px;width:81px;height:0.35px;background:#c8c8c8;"></div>
<div class="a" style="left:18.0px;top:107.9px;width:33.90418638123018px;height:0.8px;background:#b4b4b4;"></div>
<div class="a" style="left:58.0px;top:107.9px;width:25.28632418053875px;height:0.8px;background:#b4b4b4;"></div>
<div class="a" style="left:17.5px;top:111.58px;width:81px;height:0.35px;background:#c8c8c8;"></div>
<div class="a" style="left:18.0px;top:109.98px;width:30.402151928036552px;height:0.8px;background:#b4b4b4;"></div>
<div class="a" style="left:58.0px;top:109.98px;width:25.43247700878404px;height:0.8px;background:#b4b4b4;"></div>
<div class="a" style="left:17.5px;top:113.66px;width:81px;height:0.35px;background:#c8c8c8;"></div>
<div class="a" style="left:18.0px;top:112.06px;width:26.059499091971563px;height:0.8px;background:#b4b4b4;"></div>
<div class="a" style="left:58.0px;top:112.06px;width:17.614794176564573px;height:0.8px;background:#b4b4b4;"></div>
<div class="a" style="left:17.5px;top:117.82px;width:81px;height:0.35px;background:#c8c8c8;"></div>
<div class="a" style="left:24.5px;top:116.22px;width:24px;height:1px;background:#888;"></div>
<div class="a" style="left:66.5px;top:116.22px;width:26px;height:1px;background:#888;"></div>
<div class="a" style="left:17.5px;top:119.9px;width:81px;height:0.35px;background:#c8c8c8;"></div>
<div class="a" style="left:18.0px;top:118.3px;width:25.966934482274148px;height:0.8px;background:#b4b4b4;"></div>
<div class="a" style="left:58.0px;top:118.3px;width:34.83308737143912px;height:0.8px;background:#b4b4b4;"></div>
<div class="a" style="left:17.5px;top:121.98px;width:81px;height:0.35px;background:#c8c8c8;"></div>
<div class="a" style="left:18.0px;top:120.38px;width:23.509986628432628px;height:0.8px;background:#b4b4b4;"></div>
<div class="a" style="left:58.0px;top:120.38px;width:31.790044548835766px;height:0.8px;background:#b4b4b4;"></div>
<div class="a" style="left:17.5px;top:124.06px;width:81px;height:0.35px;background:#c8c8c8;"></div>
<div class="a" style="left:18.0px;top:122.46px;width:26.771052458131038px;height:0.8px;background:#b4b4b4;"></div>
<div class="a" style="left:58.0px;top:122.46px;width:15.536754517447935px;height:0.8px;background:#b4b4b4;"></div>
<div class="a" style="left:17.5px;top:126.14px;width:81px;height:0.35px;background:#c8c8c8;"></div>
<div class="a" style="left:18.0px;top:124.54px;width:28.68106541830998px;height:0.8px;background:#b4b4b4;"></div>
<div class="a" style="left:58.0px;top:124.54px;width:28.18638999035162px;height:0.8px;background:#b4b4b4;"></div>
<div class="a" style="left:17.5px;top:128.22px;width:81px;height:0.35px;background:#c8c8c8;"></div>
<div class="a" style="left:18.0px;top:126.62px;width:18.62788850934567px;height:0.8px;background:#b4b4b4;"></div>
<div class="a" style="left:58.0px;top:126.62px;width:14.744282035274px;height:0.8px;background:#b4b4b4;"></div>
<div class="a" style="left:17.5px;top:130.3px;width:81px;height:0.35px;background:#c8c8c8;"></div>
<div class="a" style="left:18.0px;top:128.7px;width:31.041599213536802px;height:0.8px;background:#b4b4b4;"></div>
<div class="a" style="left:58.0px;top:128.7px;width:25.345978127971204px;height:0.8px;background:#b4b4b4;"></div>
<div class="a" style="left:17.5px;top:132.38px;width:81px;height:0.35px;background:#c8c8c8;"></div>
<div class="a" style="left:18.0px;top:130.78px;width:27.814126329447667px;height:0.8px;background:#b4b4b4;"></div>
<div class="a" style="left:58.0px;top:130.78px;width:35.09150720613156px;height:0.8px;background:#b4b4b4;"></div>
<div class="a" style="left:57.0px;top:90.5px;width:0.4px;height:42px;background:#bbb;"></div>
<div class="a" style="left:74.5px;top:102.0px;width:22px;height:0.8px;background:#d88;"></div>
<div class="a" style="left:14.5px;top:134.0px;width:87px;height:4px;background:#d4d8df;"></div>
<div class="a" style="left:87.5px;top:134.0px;width:10px;height:3.5px;background:#3c63a8;"></div>
<div class="t" style="left:5px;top:70.0px;font-size:8px;color:#666;">5</div>
<div class="a" style="left:12.3px;top:147.5px;width:91px;height:68px;background:#f8fafd;border:1.6px solid #e8744a"></div>
<div class="a" style="left:14.5px;top:149px;width:87px;height:4px;background:linear-gradient(90deg,#8b8f96,#5d6168 40%,#b9bcc2 75%,#7e838c);"></div>
<div class="a" style="left:14.5px;top:153px;width:87px;height:6px;background:#2d5496;"></div>
<div class="a" style="left:96.5px;top:153px;width:5px;height:6px;background:#3f86d8;"></div>
<div class="a" style="left:44.5px;top:155.3px;width:26px;height:1.3px;background:#dfe6f2;"></div>
<div class="a" style="left:22.5px;top:162px;width:68px;height:1px;background:#8a8a8a;"></div>
<div class="a" style="left:22.5px;top:164.8px;width:14px;height:1px;background:#8a8a8a;"></div>
<div class="a" style="left:36.5px;top:168.5px;width:54px;height:3.2px;background:#ececec;"></div>
<div class="a" style="left:44.5px;top:169.6px;width:13px;height:0.9px;background:#8a9ab4;"></div>
<div class="a" style="left:69.5px;top:169.6px;width:11px;height:0.9px;background:#aaa;"></div>
<div class="a" style="left:28.0px;top:174px;width:65px;height:23px;background:#f4f9fd;border:.4px solid #777"></div>
<div class="a" style="left:28.8px;top:175.06px;width:1.05px;height:21.9375px;background:#6684b8;"></div>
<div class="a" style="left:29.85px;top:187.62px;width:0.9px;height:9.375px;background:#c3cbd9;"></div>
<div class="a" style="left:31.17px;top:175.25px;width:1.05px;height:21.75px;background:#6684b8;"></div>
<div class="a" style="left:32.22px;top:183.88px;width:0.9px;height:13.125px;background:#c3cbd9;"></div>
<div class="a" style="left:33.54px;top:175.44px;width:1.05px;height:21.5625px;background:#6684b8;"></div>
<div class="a" style="left:34.59px;top:185.75px;width:0.9px;height:11.25px;background:#c3cbd9;"></div>
<div class="a" style="left:35.91px;top:175.81px;width:1.05px;height:21.1875px;background:#6684b8;"></div>
<div class="a" style="left:36.96px;top:185.56px;width:0.9px;height:11.4375px;background:#c3cbd9;"></div>
<div class="a" style="left:38.28px;top:176.75px;width:1.05px;height:20.25px;background:#6684b8;"></div>
<div class="a" style="left:39.33px;top:189.12px;width:0.9px;height:7.874999999999999px;background:#c3cbd9;"></div>
<div class="a" style="left:40.65px;top:177.31px;width:1.05px;height:19.6875px;background:#6684b8;"></div>
<div class="a" style="left:41.7px;top:185.38px;width:0.9px;height:11.625000000000002px;background:#c3cbd9;"></div>
<div class="a" style="left:43.02px;top:177.69px;width:1.05px;height:19.3125px;background:#6684b8;"></div>
<div class="a" style="left:44.07px;top:186.12px;width:0.9px;height:10.875px;background:#c3cbd9;"></div>
<div class="a" style="left:45.39px;top:177.88px;width:1.05px;height:19.125px;background:#6684b8;"></div>
<div class="a" style="left:46.44px;top:186.88px;width:0.9px;height:10.125px;background:#c3cbd9;"></div>
<div class="a" style="left:47.76px;top:177.88px;width:1.05px;height:19.125px;background:#6684b8;"></div>
<div class="a" style="left:48.81px;top:183.31px;width:0.9px;height:13.687499999999998px;background:#c3cbd9;"></div>
<div class="a" style="left:50.13px;top:179.19px;width:1.05px;height:17.8125px;background:#6684b8;"></div>
<div class="a" style="left:51.18px;top:187.25px;width:0.9px;height:9.75px;background:#c3cbd9;"></div>
<div class="a" style="left:52.5px;top:180.5px;width:1.05px;height:16.5px;background:#6684b8;"></div>
<div class="a" style="left:53.55px;top:187.81px;width:0.9px;height:9.1875px;background:#c3cbd9;"></div>
<div class="a" style="left:54.87px;top:181.25px;width:1.05px;height:15.749999999999998px;background:#6684b8;"></div>
<div class="a" style="left:55.92px;top:187.25px;width:0.9px;height:9.75px;background:#c3cbd9;"></div>
<div class="a" style="left:57.24px;top:181.81px;width:1.05px;height:15.187500000000002px;background:#6684b8;"></div>
<div class="a" style="left:58.29px;top:188.56px;width:0.9px;height:8.4375px;background:#c3cbd9;"></div>
<div class="a" style="left:59.61px;top:182.0px;width:1.05px;height:15.0px;background:#6684b8;"></div>
<div class="a" style="left:60.66px;top:188.19px;width:0.9px;height:8.8125px;background:#c3cbd9;"></div>
<div class="a" style="left:61.98px;top:182.0px;width:1.05px;height:15.0px;background:#6684b8;"></div>
<div class="a" style="left:63.03px;top:187.06px;width:0.9px;height:9.9375px;background:#c3cbd9;"></div>
<div class="a" style="left:64.35px;top:182.0px;width:1.05px;height:15.0px;background:#6684b8;"></div>
<div class="a" style="left:65.4px;top:188.19px;width:0.9px;height:8.8125px;background:#c3cbd9;"></div>
<div class="a" style="left:66.72px;top:183.5px;width:1.05px;height:13.5px;background:#6684b8;"></div>
<div class="a" style="left:67.77px;top:188.0px;width:0.9px;height:9.0px;background:#c3cbd9;"></div>
<div class="a" style="left:69.09px;top:184.25px;width:1.05px;height:12.75px;background:#6684b8;"></div>
<div class="a" style="left:70.14px;top:188.0px;width:0.9px;height:9.0px;background:#c3cbd9;"></div>
<div class="a" style="left:71.46px;top:184.62px;width:1.05px;height:12.375000000000002px;background:#6684b8;"></div>
<div class="a" style="left:72.51px;top:188.19px;width:0.9px;height:8.8125px;background:#c3cbd9;"></div>
<div class="a" style="left:73.83px;top:185.0px;width:1.05px;height:12.0px;background:#6684b8;"></div>
<div class="a" style="left:74.88px;top:188.56px;width:0.9px;height:8.4375px;background:#c3cbd9;"></div>
<div class="a" style="left:76.2px;top:185.19px;width:1.05px;height:11.8125px;background:#6684b8;"></div>
<div class="a" style="left:77.25px;top:189.5px;width:0.9px;height:7.5px;background:#c3cbd9;"></div>
<div class="a" style="left:78.57px;top:187.62px;width:1.05px;height:9.375px;background:#6684b8;"></div>
<div class="a" style="left:79.62px;top:191.56px;width:0.9px;height:5.4375px;background:#c3cbd9;"></div>
<div class="a" style="left:80.94px;top:188.0px;width:1.05px;height:9.0px;background:#6684b8;"></div>
<div class="a" style="left:81.99px;top:191.56px;width:0.9px;height:5.4375px;background:#c3cbd9;"></div>
<div class="a" style="left:83.31px;top:188.56px;width:1.05px;height:8.4375px;background:#6684b8;"></div>
<div class="a" style="left:84.36px;top:190.62px;width:0.9px;height:6.375px;background:#c3cbd9;"></div>
<div class="a" style="left:85.68px;top:189.12px;width:1.05px;height:7.874999999999999px;background:#6684b8;"></div>
<div class="a" style="left:86.73px;top:191.56px;width:0.9px;height:5.4375px;background:#c3cbd9;"></div>
<div class="a" style="left:88.05px;top:190.06px;width:1.05px;height:6.9375px;background:#6684b8;"></div>
<div class="a" style="left:89.1px;top:192.31px;width:0.9px;height:4.6875px;background:#c3cbd9;"></div>
<div class="a" style="left:90.42px;top:190.62px;width:1.05px;height:6.375px;background:#6684b8;"></div>
<div class="a" style="left:91.47px;top:191.75px;width:0.9px;height:5.25px;background:#c3cbd9;"></div>
<div class="a" style="left:24.0px;top:174.0px;width:3px;height:0.7px;background:#aaa;"></div>
<div class="a" style="left:24.0px;top:177.75px;width:3px;height:0.7px;background:#aaa;"></div>
<div class="a" style="left:24.0px;top:181.5px;width:3px;height:0.7px;background:#aaa;"></div>
<div class="a" style="left:24.0px;top:185.25px;width:3px;height:0.7px;background:#aaa;"></div>
<div class="a" style="left:24.0px;top:189.0px;width:3px;height:0.7px;background:#aaa;"></div>
<div class="a" style="left:24.0px;top:192.75px;width:3px;height:0.7px;background:#aaa;"></div>
<div class="a" style="left:24.0px;top:196.5px;width:3px;height:0.7px;background:#aaa;"></div>
<div class="a" style="left:28.0px;top:198px;width:.5px;height:3.0px;background:#aaa;transform-origin:100% 0;transform:rotate(32deg)"></div>
<div class="a" style="left:30.37px;top:198px;width:.5px;height:6.0px;background:#aaa;transform-origin:100% 0;transform:rotate(32deg)"></div>
<div class="a" style="left:32.74px;top:198px;width:.5px;height:9.0px;background:#aaa;transform-origin:100% 0;transform:rotate(32deg)"></div>
<div class="a" style="left:35.11px;top:198px;width:.5px;height:4.5px;background:#aaa;transform-origin:100% 0;transform:rotate(32deg)"></div>
<div class="a" style="left:37.48px;top:198px;width:.5px;height:7.5px;background:#aaa;transform-origin:100% 0;transform:rotate(32deg)"></div>
<div class="a" style="left:39.85px;top:198px;width:.5px;height:3.0px;background:#aaa;transform-origin:100% 0;transform:rotate(32deg)"></div>
<div class="a" style="left:42.22px;top:198px;width:.5px;height:6.0px;background:#aaa;transform-origin:100% 0;transform:rotate(32deg)"></div>
<div class="a" style="left:44.59px;top:198px;width:.5px;height:9.0px;background:#aaa;transform-origin:100% 0;transform:rotate(32deg)"></div>
<div class="a" style="left:46.96px;top:198px;width:.5px;height:4.5px;background:#aaa;transform-origin:100% 0;transform:rotate(32deg)"></div>
<div class="a" style="left:49.33px;top:198px;width:.5px;height:7.5px;background:#aaa;transform-origin:100% 0;transform:rotate(32deg)"></div>
<div class="a" style="left:51.7px;top:198px;width:.5px;height:3.0px;background:#aaa;transform-origin:100% 0;transform:rotate(32deg)"></div>
<div class="a" style="left:54.07px;top:198px;width:.5px;height:6.0px;background:#aaa;transform-origin:100% 0;transform:rotate(32deg)"></div>
<div class="a" style="left:56.44px;top:198px;width:.5px;height:9.0px;background:#aaa;transform-origin:100% 0;transform:rotate(32deg)"></div>
<div class="a" style="left:58.81px;top:198px;width:.5px;height:4.5px;background:#aaa;transform-origin:100% 0;transform:rotate(32deg)"></div>
<div class="a" style="left:61.18px;top:198px;width:.5px;height:7.5px;background:#aaa;transform-origin:100% 0;transform:rotate(32deg)"></div>
<div class="a" style="left:63.55px;top:198px;width:.5px;height:3.0px;background:#aaa;transform-origin:100% 0;transform:rotate(32deg)"></div>
<div class="a" style="left:65.92px;top:198px;width:.5px;height:6.0px;background:#aaa;transform-origin:100% 0;transform:rotate(32deg)"></div>
<div class="a" style="left:68.29px;top:198px;width:.5px;height:9.0px;background:#aaa;transform-origin:100% 0;transform:rotate(32deg)"></div>
<div class="a" style="left:70.66px;top:198px;width:.5px;height:4.5px;background:#aaa;transform-origin:100% 0;transform:rotate(32deg)"></div>
<div class="a" style="left:73.03px;top:198px;width:.5px;height:7.5px;background:#aaa;transform-origin:100% 0;transform:rotate(32deg)"></div>
<div class="a" style="left:75.4px;top:198px;width:.5px;height:3.0px;background:#aaa;transform-origin:100% 0;transform:rotate(32deg)"></div>
<div class="a" style="left:77.77px;top:198px;width:.5px;height:6.0px;background:#aaa;transform-origin:100% 0;transform:rotate(32deg)"></div>
<div class="a" style="left:80.14px;top:198px;width:.5px;height:9.0px;background:#aaa;transform-origin:100% 0;transform:rotate(32deg)"></div>
<div class="a" style="left:82.51px;top:198px;width:.5px;height:4.5px;background:#aaa;transform-origin:100% 0;transform:rotate(32deg)"></div>
<div class="a" style="left:84.88px;top:198px;width:.5px;height:7.5px;background:#aaa;transform-origin:100% 0;transform:rotate(32deg)"></div>
<div class="a" style="left:87.25px;top:198px;width:.5px;height:3.0px;background:#aaa;transform-origin:100% 0;transform:rotate(32deg)"></div>
<div class="a" style="left:89.62px;top:198px;width:.5px;height:6.0px;background:#aaa;transform-origin:100% 0;transform:rotate(32deg)"></div>
<div class="a" style="left:14.5px;top:210px;width:87px;height:4px;background:#d4d8df;"></div>
<div class="a" style="left:87.5px;top:210px;width:10px;height:3.5px;background:#3c63a8;"></div>
<div class="t" style="left:5px;top:145.5px;font-size:8px;color:#e8744a;">6</div>
<div class="a" style="left:14.5px;top:224px;width:87px;height:66.5px;background:#f8fafd;"></div>
<div class="a" style="left:14.5px;top:224px;width:87px;height:4px;background:linear-gradient(90deg,#8b8f96,#5d6168 40%,#b9bcc2 75%,#7e838c);"></div>
<div class="a" style="left:14.5px;top:228px;width:87px;height:6px;background:#2d5496;"></div>
<div class="a" style="left:96.5px;top:228px;width:5px;height:6px;background:#3f86d8;"></div>
<div class="a" style="left:25.5px;top:230px;width:64px;height:1.8px;background:#e6ecf6;"></div>
<div class="a" style="left:32.5px;top:238.5px;width:16px;height:1px;background:#999;"></div>
<div class="a" style="left:68.5px;top:238.5px;width:20px;height:1px;background:#999;"></div>
<div class="a" style="left:22.5px;top:242.5px;width:26px;height:0.8px;background:#bbb;"></div>
<div class="a" style="left:62.5px;top:242.5px;width:30px;height:0.8px;background:#bbb;"></div>
<div class="a" style="left:16.5px;top:246.5px;width:38px;height:24.5px;background:#f6fafd;border:.4px solid #aaa"></div>
<div class="a" style="left:59.0px;top:246.5px;width:36px;height:24.5px;background:#f6fafd;border:.4px solid #aaa"></div>
<div class="a" style="left:17.8px;top:247.48px;width:1.5px;height:23.52px;background:#7d98c2;"></div>
<div class="a" style="left:20.05px;top:248.46px;width:1.5px;height:22.54px;background:#7d98c2;"></div>
<div class="a" style="left:22.3px;top:249.93px;width:1.5px;height:21.07px;background:#7d98c2;"></div>
<div class="a" style="left:24.55px;top:251.4px;width:1.5px;height:19.6px;background:#7d98c2;"></div>
<div class="a" style="left:26.8px;top:252.38px;width:1.5px;height:18.62px;background:#7d98c2;"></div>
<div class="a" style="left:29.05px;top:252.87px;width:1.5px;height:18.13px;background:#7d98c2;"></div>
<div class="a" style="left:31.3px;top:255.32px;width:1.5px;height:15.68px;background:#7d98c2;"></div>
<div class="a" style="left:33.55px;top:256.79px;width:1.5px;height:14.209999999999999px;background:#7d98c2;"></div>
<div class="a" style="left:35.8px;top:257.28px;width:1.5px;height:13.719999999999999px;background:#7d98c2;"></div>
<div class="a" style="left:38.05px;top:258.75px;width:1.5px;height:12.25px;background:#7d98c2;"></div>
<div class="a" style="left:40.3px;top:260.22px;width:1.5px;height:10.78px;background:#7d98c2;"></div>
<div class="a" style="left:42.55px;top:263.16px;width:1.5px;height:7.84px;background:#7d98c2;"></div>
<div class="a" style="left:44.8px;top:264.63px;width:1.5px;height:6.37px;background:#7d98c2;"></div>
<div class="a" style="left:47.05px;top:263.65px;width:1.5px;height:7.35px;background:#7d98c2;"></div>
<div class="a" style="left:49.3px;top:268.06px;width:1.5px;height:2.94px;background:#7d98c2;"></div>
<div class="a" style="left:51.55px;top:268.55px;width:1.5px;height:2.45px;background:#7d98c2;"></div>
<div class="a" style="left:60.0px;top:249.44px;width:1.5px;height:21.56px;background:#7d98c2;"></div>
<div class="a" style="left:62.15px;top:255.32px;width:1.5px;height:15.68px;background:#7d98c2;"></div>
<div class="a" style="left:64.3px;top:261.2px;width:1.5px;height:9.8px;background:#7d98c2;"></div>
<div class="a" style="left:66.45px;top:262.67px;width:1.5px;height:8.33px;background:#7d98c2;"></div>
<div class="a" style="left:68.6px;top:264.14px;width:1.5px;height:6.859999999999999px;background:#7d98c2;"></div>
<div class="a" style="left:70.75px;top:264.63px;width:1.5px;height:6.37px;background:#7d98c2;"></div>
<div class="a" style="left:72.9px;top:265.12px;width:1.5px;height:5.88px;background:#7d98c2;"></div>
<div class="a" style="left:75.05px;top:265.12px;width:1.5px;height:5.88px;background:#7d98c2;"></div>
<div class="a" style="left:77.2px;top:265.61px;width:1.5px;height:5.39px;background:#7d98c2;"></div>
<div class="a" style="left:79.35px;top:265.61px;width:1.5px;height:5.39px;background:#7d98c2;"></div>
<div class="a" style="left:81.5px;top:266.1px;width:1.5px;height:4.9px;background:#7d98c2;"></div>
<div class="a" style="left:83.65px;top:268.06px;width:1.5px;height:2.94px;background:#7d98c2;"></div>
<div class="a" style="left:85.8px;top:269.53px;width:1.5px;height:1.47px;background:#7d98c2;"></div>
<div class="a" style="left:87.95px;top:270.02px;width:1.5px;height:0.98px;background:#7d98c2;"></div>
<div class="a" style="left:90.1px;top:270.02px;width:1.5px;height:0.98px;background:#7d98c2;"></div>
<div class="a" style="left:92.25px;top:270.22px;width:1.5px;height:0.784px;background:#7d98c2;"></div>
<div class="a" style="left:17.0px;top:272px;width:.5px;height:3.0px;background:#aaa;transform-origin:100% 0;transform:rotate(32deg)"></div>
<div class="a" style="left:59.5px;top:272px;width:.5px;height:3.0px;background:#aaa;transform-origin:100% 0;transform:rotate(32deg)"></div>
<div class="a" style="left:19.25px;top:272px;width:.5px;height:6.9px;background:#aaa;transform-origin:100% 0;transform:rotate(32deg)"></div>
<div class="a" style="left:61.65px;top:272px;width:.5px;height:4.3px;background:#aaa;transform-origin:100% 0;transform:rotate(32deg)"></div>
<div class="a" style="left:21.5px;top:272px;width:.5px;height:5.6px;background:#aaa;transform-origin:100% 0;transform:rotate(32deg)"></div>
<div class="a" style="left:63.8px;top:272px;width:.5px;height:5.6px;background:#aaa;transform-origin:100% 0;transform:rotate(32deg)"></div>
<div class="a" style="left:23.75px;top:272px;width:.5px;height:4.3px;background:#aaa;transform-origin:100% 0;transform:rotate(32deg)"></div>
<div class="a" style="left:65.95px;top:272px;width:.5px;height:6.9px;background:#aaa;transform-origin:100% 0;transform:rotate(32deg)"></div>
<div class="a" style="left:26.0px;top:272px;width:.5px;height:3.0px;background:#aaa;transform-origin:100% 0;transform:rotate(32deg)"></div>
<div class="a" style="left:68.1px;top:272px;width:.5px;height:3.0px;background:#aaa;transform-origin:100% 0;transform:rotate(32deg)"></div>
<div class="a" style="left:28.25px;top:272px;width:.5px;height:6.9px;background:#aaa;transform-origin:100% 0;transform:rotate(32deg)"></div>
<div class="a" style="left:70.25px;top:272px;width:.5px;height:4.3px;background:#aaa;transform-origin:100% 0;transform:rotate(32deg)"></div>
<div class="a" style="left:30.5px;top:272px;width:.5px;height:5.6px;background:#aaa;transform-origin:100% 0;transform:rotate(32deg)"></div>
<div class="a" style="left:72.4px;top:272px;width:.5px;height:5.6px;background:#aaa;transform-origin:100% 0;transform:rotate(32deg)"></div>
<div class="a" style="left:32.75px;top:272px;width:.5px;height:4.3px;background:#aaa;transform-origin:100% 0;transform:rotate(32deg)"></div>
<div class="a" style="left:74.55px;top:272px;width:.5px;height:6.9px;background:#aaa;transform-origin:100% 0;transform:rotate(32deg)"></div>
<div class="a" style="left:35.0px;top:272px;width:.5px;height:3.0px;background:#aaa;transform-origin:100% 0;transform:rotate(32deg)"></div>
<div class="a" style="left:76.7px;top:272px;width:.5px;height:3.0px;background:#aaa;transform-origin:100% 0;transform:rotate(32deg)"></div>
<div class="a" style="left:37.25px;top:272px;width:.5px;height:6.9px;background:#aaa;transform-origin:100% 0;transform:rotate(32deg)"></div>
<div class="a" style="left:78.85px;top:272px;width:.5px;height:4.3px;background:#aaa;transform-origin:100% 0;transform:rotate(32deg)"></div>
<div class="a" style="left:39.5px;top:272px;width:.5px;height:5.6px;background:#aaa;transform-origin:100% 0;transform:rotate(32deg)"></div>
<div class="a" style="left:81.0px;top:272px;width:.5px;height:5.6px;background:#aaa;transform-origin:100% 0;transform:rotate(32deg)"></div>
<div class="a" style="left:41.75px;top:272px;width:.5px;height:4.3px;background:#aaa;transform-origin:100% 0;transform:rotate(32deg)"></div>
<div class="a" style="left:83.15px;top:272px;width:.5px;height:6.9px;background:#aaa;transform-origin:100% 0;transform:rotate(32deg)"></div>
<div class="a" style="left:44.0px;top:272px;width:.5px;height:3.0px;background:#aaa;transform-origin:100% 0;transform:rotate(32deg)"></div>
<div class="a" style="left:85.3px;top:272px;width:.5px;height:3.0px;background:#aaa;transform-origin:100% 0;transform:rotate(32deg)"></div>
<div class="a" style="left:46.25px;top:272px;width:.5px;height:6.9px;background:#aaa;transform-origin:100% 0;transform:rotate(32deg)"></div>
<div class="a" style="left:87.45px;top:272px;width:.5px;height:4.3px;background:#aaa;transform-origin:100% 0;transform:rotate(32deg)"></div>
<div class="a" style="left:48.5px;top:272px;width:.5px;height:5.6px;background:#aaa;transform-origin:100% 0;transform:rotate(32deg)"></div>
<div class="a" style="left:89.6px;top:272px;width:.5px;height:5.6px;background:#aaa;transform-origin:100% 0;transform:rotate(32deg)"></div>
<div class="a" style="left:50.75px;top:272px;width:.5px;height:4.3px;background:#aaa;transform-origin:100% 0;transform:rotate(32deg)"></div>
<div class="a" style="left:91.75px;top:272px;width:.5px;height:6.9px;background:#aaa;transform-origin:100% 0;transform:rotate(32deg)"></div>
<div class="a" style="left:14.5px;top:286.5px;width:87px;height:4px;background:#d4d8df;"></div>
<div class="a" style="left:87.5px;top:286.5px;width:10px;height:3.5px;background:#3c63a8;"></div>
<div class="t" style="left:5px;top:222.0px;font-size:8px;color:#666;">7</div>
<div class="a" style="left:14.5px;top:301px;width:87px;height:66px;background:#fbfbfd;"></div>
<div class="a" style="left:14.5px;top:301px;width:87px;height:4px;background:linear-gradient(90deg,#8b8f96,#5d6168 40%,#b9bcc2 75%,#7e838c);"></div>
<div class="a" style="left:14.5px;top:305px;width:87px;height:6px;background:#2d5496;"></div>
<div class="a" style="left:96.5px;top:305px;width:5px;height:6px;background:#3f86d8;"></div>
<div class="a" style="left:43.5px;top:306.8px;width:30px;height:1.8px;background:#e6ecf6;"></div>
<div class="a" style="left:20.5px;top:314px;width:6px;height:1.1px;background:#666;"></div>
<div class="a" style="left:29.5px;top:314px;width:70px;height:1.3px;background:#333;"></div>
<div class="a" style="left:29.5px;top:318.8px;width:19px;height:1.3px;background:#333;"></div>
<div class="a" style="left:20.8px;top:324.3px;width:79.5px;height:8.2px;background:#5f8acb;"></div>
<div class="a" style="left:20.8px;top:332.5px;width:79.5px;height:7.2px;background:#d3dff2;"></div>
<div class="a" style="left:20.8px;top:332.2px;width:79.5px;height:0.6px;background:#3f63a6;"></div>
<div class="a" style="left:20.8px;top:339.7px;width:79.5px;height:7.2px;background:#fdfdfe;"></div>
<div class="a" style="left:20.8px;top:339.4px;width:79.5px;height:0.6px;background:#3f63a6;"></div>
<div class="a" style="left:20.8px;top:346.9px;width:79.5px;height:7.2px;background:#d3dff2;"></div>
<div class="a" style="left:20.8px;top:346.6px;width:79.5px;height:0.6px;background:#3f63a6;"></div>
<div class="a" style="left:20.8px;top:354.1px;width:79.5px;height:7.2px;background:#fdfdfe;"></div>
<div class="a" style="left:20.8px;top:353.8px;width:79.5px;height:0.6px;background:#3f63a6;"></div>
<div class="a" style="left:20.8px;top:361.0px;width:79.5px;height:0.8px;background:#3f63a6;"></div>
<div class="a" style="left:20.8px;top:324.0px;width:79.5px;height:0.6px;background:#3f63a6;"></div>
<div class="a" style="left:32.75px;top:324.3px;width:0.5px;height:37px;background:#4a6fb0;"></div>
<div class="a" style="left:55.15px;top:324.3px;width:0.5px;height:37px;background:#4a6fb0;"></div>
<div class="a" style="left:77.55px;top:324.3px;width:0.5px;height:37px;background:#4a6fb0;"></div>
<div class="a" style="left:23.85px;top:327.8px;width:6.71px;height:1.2px;background:#cfdcf2;"></div>
<div class="a" style="left:38.6px;top:327.8px;width:12.320000000000002px;height:1.2px;background:#cfdcf2;"></div>
<div class="a" style="left:61.0px;top:327.8px;width:12.32px;height:1.2px;background:#cfdcf2;"></div>
<div class="a" style="left:83.43px;top:327.8px;width:12.375000000000002px;height:1.2px;background:#cfdcf2;"></div>
<div class="a" style="left:23.3px;top:335.5px;width:3.5px;height:1.2px;background:#7d8fb4;"></div>
<div class="a" style="left:50.4px;top:335.5px;width:3px;height:1.2px;background:#555;"></div>
<div class="a" style="left:72.8px;top:335.5px;width:3px;height:1.2px;background:#555;"></div>
<div class="a" style="left:95.3px;top:335.5px;width:3px;height:1.2px;background:#555;"></div>
<div class="a" style="left:23.3px;top:342.7px;width:3.5px;height:1.2px;background:#7d8fb4;"></div>
<div class="a" style="left:50.4px;top:342.7px;width:3px;height:1.2px;background:#555;"></div>
<div class="a" style="left:72.8px;top:342.7px;width:3px;height:1.2px;background:#555;"></div>
<div class="a" style="left:95.3px;top:342.7px;width:3px;height:1.2px;background:#555;"></div>
<div class="a" style="left:23.3px;top:349.9px;width:3.5px;height:1.2px;background:#7d8fb4;"></div>
<div class="a" style="left:50.4px;top:349.9px;width:3px;height:1.2px;background:#555;"></div>
<div class="a" style="left:72.8px;top:349.9px;width:3px;height:1.2px;background:#555;"></div>
<div class="a" style="left:95.3px;top:349.9px;width:3px;height:1.2px;background:#555;"></div>
<div class="a" style="left:23.3px;top:357.1px;width:3.5px;height:1.2px;background:#7d8fb4;"></div>
<div class="a" style="left:50.4px;top:357.1px;width:3px;height:1.2px;background:#555;"></div>
<div class="a" style="left:72.8px;top:357.1px;width:3px;height:1.2px;background:#555;"></div>
<div class="a" style="left:95.3px;top:357.1px;width:3px;height:1.2px;background:#555;"></div>
<div class="a" style="left:14.5px;top:363px;width:87px;height:4px;background:#d4d8df;"></div>
<div class="a" style="left:87.5px;top:363px;width:10px;height:3.5px;background:#3c63a8;"></div>
<div class="t" style="left:5px;top:299.0px;font-size:8px;color:#666;">8</div>
<div class="a" style="left:14.5px;top:377px;width:87px;height:24px;background:#fbfbfd;"></div>
<div class="a" style="left:14.5px;top:377px;width:87px;height:4px;background:linear-gradient(90deg,#8b8f96,#5d6168 40%,#b9bcc2 75%,#7e838c);"></div>
<div class="a" style="left:14.5px;top:381px;width:87px;height:6px;background:#2d5496;"></div>
<div class="a" style="left:96.5px;top:381px;width:5px;height:6px;background:#3f86d8;"></div>
<div class="a" style="left:46.5px;top:382.8px;width:24px;height:1.8px;background:#e6ecf6;"></div>
<div class="a" style="left:20.5px;top:388.5px;width:6px;height:1.1px;background:#666;"></div>
<div class="a" style="left:29.5px;top:388.5px;width:22px;height:1.3px;background:#333;"></div>
<div class="a" style="left:19.5px;top:394px;width:77px;height:7px;background:#5f8acb;"></div>
<div class="a" style="left:41.5px;top:394px;width:0.5px;height:7px;background:#4a6fb0;"></div>
<div class="a" style="left:59.5px;top:394px;width:0.5px;height:7px;background:#4a6fb0;"></div>
<div class="a" style="left:77.5px;top:394px;width:0.5px;height:7px;background:#4a6fb0;"></div>
<div class="t" style="left:5px;top:375.0px;font-size:8px;color:#666;">9</div>
<div class="a" style="left:122px;top:72px;width:643px;height:329px;background:#e6e6e6;"></div>
<div class="a" style="left:758px;top:72px;width:7px;height:304.5px;background:#e2e2e2;"></div>
<div class="a" style="left:758.5px;top:74px;width:6px;height:6px;background:#fdfdfd;"></div>
<div class="t" style="left:759.5px;top:75.0px;font-size:4px;color:#555;">▴</div>
<div class="a" style="left:758px;top:139px;width:6.5px;height:11px;background:#fdfdfd;border:.5px solid #cfcfcf"></div>
<div class="a" style="left:758.5px;top:347px;width:6px;height:6px;background:#fdfdfd;"></div>
<div class="t" style="left:759.5px;top:348.0px;font-size:4px;color:#555;">▾</div>
<div class="a" style="left:758.5px;top:355.5px;width:6px;height:6px;background:#fdfdfd;"></div>
<div class="a" style="left:758.5px;top:364px;width:6px;height:6px;background:#fdfdfd;"></div>
<div class="t" style="left:759.7px;top:356.5px;font-size:4px;color:#555;">≑</div>
<div class="t" style="left:759.7px;top:365.0px;font-size:4px;color:#555;">≑</div>
<div class="a" style="left:122px;top:376.5px;width:636px;height:0.8px;background:#cfcfcf;"></div>
<div class="a" style="left:122px;top:377.3px;width:636px;height:23px;background:#ececec;"></div>
<div class="a" style="left:126.5px;top:383px;width:0.9px;height:11px;background:#555;"></div>
<div class="a" style="left:242.3px;top:76.3px;width:394.5px;height:296px;background:#f6f7fb;"></div>
<div class="a" style="left:242.3px;top:76.3px;width:394.5px;height:18px;overflow:hidden;background:linear-gradient(90deg,#6c6e72 0%,#7b7d81 15%,#85878b 30%,#8d8f93 45%,#9a9ca0 60%,#a4a6aa 75%,#b4b6ba 90%,#c4c6c9 100%)"><div class="a" style="left:82.69999999999999px;top:-7px;width:48px;height:18px;border-radius:50%;background:#4b4d52;filter:blur(1.800px)"></div><div class="a" style="left:232.7px;top:2px;width:18px;height:13px;border-radius:50%;background:#dfe1e5;filter:blur(1.800px);opacity:.9"></div><div class="a" style="left:344.7px;top:1px;width:26px;height:15px;border-radius:50%;background:#eceef1;filter:blur(2px);opacity:.95"></div></div>
<div class="a" style="left:242.3px;top:94px;width:394.5px;height:26.3px;background:linear-gradient(90deg,#2a4d90 0%,#2c5194 50%,#325a9e 80%,#2f5aa0 100%);"></div>
<div class="a" style="left:473px;top:94px;width:24px;height:14px;border-radius:50%;background:#5f86c4;filter:blur(3px);opacity:.55"></div>
<div class="a" style="left:583px;top:94px;width:30px;height:18px;border-radius:50%;background:#6a90cc;filter:blur(3px);opacity:.6"></div>
<svg class="a" style="left:611px;top:76.3px" width="26" height="44.300" viewBox="0 0 26 44.300"><path d="M15 0h11v18h-16z" fill="#f4f6fa"/><path d="M10 18h16v26.300H3z" fill="#4384d6"/></svg>
<div class="t" style="left:377px;top:100.35px;font-size:13.3px;color:#fff;letter-spacing:.05px">ЗАРОБІТНА ПЛАТНЯ</div>
<div class="a" style="left:242.3px;top:120.3px;width:394.5px;height:8px;background:linear-gradient(180deg,rgba(200,208,225,.55),rgba(243,245,250,0));"></div>
<div class="a" style="left:273px;top:132px;width:363.5px;height:223.5px;background:#fff;"></div>
<div class="t" style="left:280.5px;top:130.8px;font-size:10.500px;color:#151515;-webkit-text-stroke:.25px #151515;transform-origin:0 0;transform:scaleX(.597);line-height:12.800px;white-space:nowrap">Annual average salaries in public institutions, in equivalent USD converted using purchasing power parity (PPP) for<br>private consumption</div>
<div class="a" style="left:309.5px;top:173.5px;width:286px;height:14px;background:#eeeeee;"></div>
<div class="a" style="left:360px;top:177px;width:8.5px;height:6.5px;background:#4a72b4;border:.5px solid #33528a"></div>
<div class="t" style="left:372px;top:177px;font-size:7px;color:#1a1a1a;-webkit-text-stroke:.15px #222;transform-origin:0 0;transform:scaleX(.60)">Actual salaries of school heads</div>
<div class="a" style="left:479.5px;top:177px;width:8.5px;height:6.5px;background:#e4e6ea;border:.6px solid #555"></div>
<div class="t" style="left:491px;top:177px;font-size:7px;color:#1a1a1a;-webkit-text-stroke:.15px #222;transform-origin:0 0;transform:scaleX(.60)">Actual salaries of teachers</div>
<div class="t" style="left:290px;top:177.5px;font-size:6.500px;color:#1a1a1a;-webkit-text-stroke:.15px #222;transform-origin:0 0;transform:scaleX(.75);line-height:7.800px;text-align:center">USD<br>(PPP)</div>
<div class="a" style="left:309px;top:199.3px;width:287px;height:96px;background:linear-gradient(180deg,#f4f9fd,#fbfdff);border:.8px solid #222"></div>
<div class="t" style="right:460.7px;top:196.0px;font-size:6.600px;color:#111;-webkit-text-stroke:.15px #111;transform-origin:100% 0;transform:scaleX(.68)">120 000</div>
<div class="a" style="left:306.8px;top:199.6px;width:2.2px;height:0.6px;background:#444;"></div>
<div class="t" style="right:460.7px;top:212.0px;font-size:6.600px;color:#111;-webkit-text-stroke:.15px #111;transform-origin:100% 0;transform:scaleX(.68)">100 000</div>
<div class="a" style="left:306.8px;top:215.6px;width:2.2px;height:0.6px;background:#444;"></div>
<div class="t" style="right:460.7px;top:228.0px;font-size:6.600px;color:#111;-webkit-text-stroke:.15px #111;transform-origin:100% 0;transform:scaleX(.68)">80 000</div>
<div class="a" style="left:306.8px;top:231.6px;width:2.2px;height:0.6px;background:#444;"></div>
<div class="t" style="right:460.7px;top:244.0px;font-size:6.600px;color:#111;-webkit-text-stroke:.15px #111;transform-origin:100% 0;transform:scaleX(.68)">60 000</div>
<div class="a" style="left:306.8px;top:247.6px;width:2.2px;height:0.6px;background:#444;"></div>
<div class="t" style="right:460.7px;top:260.0px;font-size:6.600px;color:#111;-webkit-text-stroke:.15px #111;transform-origin:100% 0;transform:scaleX(.68)">40 000</div>
<div class="a" style="left:306.8px;top:263.6px;width:2.2px;height:0.6px;background:#444;"></div>
<div class="t" style="right:460.7px;top:276.0px;font-size:6.600px;color:#111;-webkit-text-stroke:.15px #111;transform-origin:100% 0;transform:scaleX(.68)">20 000</div>
<div class="a" style="left:306.8px;top:279.6px;width:2.2px;height:0.6px;background:#444;"></div>
<div class="t" style="right:460.7px;top:292.0px;font-size:6.600px;color:#111;-webkit-text-stroke:.15px #111;transform-origin:100% 0;transform:scaleX(.68)">0</div>
<div class="a" style="left:312.3px;top:201.7px;width:3.3px;height:93.6px;background:linear-gradient(90deg,#7395ca,#4873b3 55%,#3d639d);"></div>
<div class="a" style="left:315.6px;top:255.3px;width:3.2px;height:40.0px;background:linear-gradient(90deg,#eef0f3,#d8dce2);border:.5px solid #a3a8b0;border-bottom:none"></div>
<div class="a" style="left:322.91px;top:202.5px;width:3.3px;height:92.8px;background:linear-gradient(90deg,#7395ca,#4873b3 55%,#3d639d);"></div>
<div class="a" style="left:326.21px;top:239.3px;width:3.2px;height:56.0px;background:linear-gradient(90deg,#eef0f3,#d8dce2);border:.5px solid #a3a8b0;border-bottom:none"></div>
<div class="a" style="left:333.52px;top:203.3px;width:3.3px;height:92.0px;background:linear-gradient(90deg,#7395ca,#4873b3 55%,#3d639d);"></div>
<div class="a" style="left:336.82px;top:247.3px;width:3.2px;height:48.0px;background:linear-gradient(90deg,#eef0f3,#d8dce2);border:.5px solid #a3a8b0;border-bottom:none"></div>
<div class="a" style="left:344.13px;top:204.9px;width:3.3px;height:90.4px;background:linear-gradient(90deg,#7395ca,#4873b3 55%,#3d639d);"></div>
<div class="a" style="left:347.43px;top:246.5px;width:3.2px;height:48.8px;background:linear-gradient(90deg,#eef0f3,#d8dce2);border:.5px solid #a3a8b0;border-bottom:none"></div>
<div class="a" style="left:354.74px;top:208.9px;width:3.3px;height:86.4px;background:linear-gradient(90deg,#7395ca,#4873b3 55%,#3d639d);"></div>
<div class="a" style="left:358.04px;top:261.7px;width:3.2px;height:33.599999999999994px;background:linear-gradient(90deg,#eef0f3,#d8dce2);border:.5px solid #a3a8b0;border-bottom:none"></div>
<div class="a" style="left:365.35px;top:211.3px;width:3.3px;height:84.0px;background:linear-gradient(90deg,#7395ca,#4873b3 55%,#3d639d);"></div>
<div class="a" style="left:368.65px;top:245.7px;width:3.2px;height:49.60000000000001px;background:linear-gradient(90deg,#eef0f3,#d8dce2);border:.5px solid #a3a8b0;border-bottom:none"></div>
<div class="a" style="left:375.96px;top:212.9px;width:3.3px;height:82.39999999999999px;background:linear-gradient(90deg,#7395ca,#4873b3 55%,#3d639d);"></div>
<div class="a" style="left:379.26px;top:248.9px;width:3.2px;height:46.4px;background:linear-gradient(90deg,#eef0f3,#d8dce2);border:.5px solid #a3a8b0;border-bottom:none"></div>
<div class="a" style="left:386.57px;top:213.7px;width:3.3px;height:81.6px;background:linear-gradient(90deg,#7395ca,#4873b3 55%,#3d639d);"></div>
<div class="a" style="left:389.87px;top:252.1px;width:3.2px;height:43.2px;background:linear-gradient(90deg,#eef0f3,#d8dce2);border:.5px solid #a3a8b0;border-bottom:none"></div>
<div class="a" style="left:397.18px;top:213.7px;width:3.3px;height:81.6px;background:linear-gradient(90deg,#7395ca,#4873b3 55%,#3d639d);"></div>
<div class="a" style="left:400.48px;top:236.9px;width:3.2px;height:58.39999999999999px;background:linear-gradient(90deg,#eef0f3,#d8dce2);border:.5px solid #a3a8b0;border-bottom:none"></div>
<div class="a" style="left:407.79px;top:219.3px;width:3.3px;height:76.0px;background:linear-gradient(90deg,#7395ca,#4873b3 55%,#3d639d);"></div>
<div class="a" style="left:411.09px;top:253.7px;width:3.2px;height:41.6px;background:linear-gradient(90deg,#eef0f3,#d8dce2);border:.5px solid #a3a8b0;border-bottom:none"></div>
<div class="a" style="left:418.4px;top:224.9px;width:3.3px;height:70.39999999999999px;background:linear-gradient(90deg,#7395ca,#4873b3 55%,#3d639d);"></div>
<div class="a" style="left:421.7px;top:256.1px;width:3.2px;height:39.2px;background:linear-gradient(90deg,#eef0f3,#d8dce2);border:.5px solid #a3a8b0;border-bottom:none"></div>
<div class="a" style="left:429.01px;top:228.1px;width:3.3px;height:67.19999999999999px;background:linear-gradient(90deg,#7395ca,#4873b3 55%,#3d639d);"></div>
<div class="a" style="left:432.31px;top:253.7px;width:3.2px;height:41.6px;background:linear-gradient(90deg,#eef0f3,#d8dce2);border:.5px solid #a3a8b0;border-bottom:none"></div>
<div class="a" style="left:439.62px;top:230.5px;width:3.3px;height:64.80000000000001px;background:linear-gradient(90deg,#7395ca,#4873b3 55%,#3d639d);"></div>
<div class="a" style="left:442.92px;top:259.3px;width:3.2px;height:36.0px;background:linear-gradient(90deg,#eef0f3,#d8dce2);border:.5px solid #a3a8b0;border-bottom:none"></div>
<div class="a" style="left:450.23px;top:231.3px;width:3.3px;height:64.0px;background:linear-gradient(90deg,#7395ca,#4873b3 55%,#3d639d);"></div>
<div class="a" style="left:453.53px;top:257.7px;width:3.2px;height:37.6px;background:linear-gradient(90deg,#eef0f3,#d8dce2);border:.5px solid #a3a8b0;border-bottom:none"></div>
<div class="a" style="left:460.84px;top:231.3px;width:3.3px;height:64.0px;background:linear-gradient(90deg,#7395ca,#4873b3 55%,#3d639d);"></div>
<div class="a" style="left:464.14px;top:252.9px;width:3.2px;height:42.4px;background:linear-gradient(90deg,#eef0f3,#d8dce2);border:.5px solid #a3a8b0;border-bottom:none"></div>
<div class="a" style="left:471.45px;top:231.3px;width:3.3px;height:64.0px;background:linear-gradient(90deg,#7395ca,#4873b3 55%,#3d639d);"></div>
<div class="a" style="left:474.75px;top:257.7px;width:3.2px;height:37.6px;background:linear-gradient(90deg,#eef0f3,#d8dce2);border:.5px solid #a3a8b0;border-bottom:none"></div>
<div class="a" style="left:482.06px;top:237.7px;width:3.3px;height:57.599999999999994px;background:linear-gradient(90deg,#7395ca,#4873b3 55%,#3d639d);"></div>
<div class="a" style="left:485.36px;top:256.9px;width:3.2px;height:38.400000000000006px;background:linear-gradient(90deg,#eef0f3,#d8dce2);border:.5px solid #a3a8b0;border-bottom:none"></div>
<div class="a" style="left:492.67px;top:240.9px;width:3.3px;height:54.4px;background:linear-gradient(90deg,#7395ca,#4873b3 55%,#3d639d);"></div>
<div class="a" style="left:495.97px;top:256.9px;width:3.2px;height:38.400000000000006px;background:linear-gradient(90deg,#eef0f3,#d8dce2);border:.5px solid #a3a8b0;border-bottom:none"></div>
<div class="a" style="left:503.28px;top:242.5px;width:3.3px;height:52.800000000000004px;background:linear-gradient(90deg,#7395ca,#4873b3 55%,#3d639d);"></div>
<div class="a" style="left:506.58px;top:257.7px;width:3.2px;height:37.6px;background:linear-gradient(90deg,#eef0f3,#d8dce2);border:.5px solid #a3a8b0;border-bottom:none"></div>
<div class="a" style="left:513.89px;top:244.1px;width:3.3px;height:51.2px;background:linear-gradient(90deg,#7395ca,#4873b3 55%,#3d639d);"></div>
<div class="a" style="left:517.19px;top:259.3px;width:3.2px;height:36.0px;background:linear-gradient(90deg,#eef0f3,#d8dce2);border:.5px solid #a3a8b0;border-bottom:none"></div>
<div class="a" style="left:524.5px;top:244.9px;width:3.3px;height:50.400000000000006px;background:linear-gradient(90deg,#7395ca,#4873b3 55%,#3d639d);"></div>
<div class="a" style="left:527.8px;top:263.3px;width:3.2px;height:32.0px;background:linear-gradient(90deg,#eef0f3,#d8dce2);border:.5px solid #a3a8b0;border-bottom:none"></div>
<div class="a" style="left:535.11px;top:255.3px;width:3.3px;height:40.0px;background:linear-gradient(90deg,#7395ca,#4873b3 55%,#3d639d);"></div>
<div class="a" style="left:538.41px;top:272.1px;width:3.2px;height:23.2px;background:linear-gradient(90deg,#eef0f3,#d8dce2);border:.5px solid #a3a8b0;border-bottom:none"></div>
<div class="a" style="left:545.72px;top:256.9px;width:3.3px;height:38.400000000000006px;background:linear-gradient(90deg,#7395ca,#4873b3 55%,#3d639d);"></div>
<div class="a" style="left:549.02px;top:272.1px;width:3.2px;height:23.2px;background:linear-gradient(90deg,#eef0f3,#d8dce2);border:.5px solid #a3a8b0;border-bottom:none"></div>
<div class="a" style="left:556.33px;top:259.3px;width:3.3px;height:36.0px;background:linear-gradient(90deg,#7395ca,#4873b3 55%,#3d639d);"></div>
<div class="a" style="left:559.63px;top:268.1px;width:3.2px;height:27.2px;background:linear-gradient(90deg,#eef0f3,#d8dce2);border:.5px solid #a3a8b0;border-bottom:none"></div>
<div class="a" style="left:566.94px;top:261.7px;width:3.3px;height:33.599999999999994px;background:linear-gradient(90deg,#7395ca,#4873b3 55%,#3d639d);"></div>
<div class="a" style="left:570.24px;top:272.1px;width:3.2px;height:23.2px;background:linear-gradient(90deg,#eef0f3,#d8dce2);border:.5px solid #a3a8b0;border-bottom:none"></div>
<div class="a" style="left:577.55px;top:265.7px;width:3.3px;height:29.6px;background:linear-gradient(90deg,#7395ca,#4873b3 55%,#3d639d);"></div>
<div class="a" style="left:580.85px;top:275.3px;width:3.2px;height:20.0px;background:linear-gradient(90deg,#eef0f3,#d8dce2);border:.5px solid #a3a8b0;border-bottom:none"></div>
<div class="a" style="left:588.16px;top:268.1px;width:3.3px;height:27.2px;background:linear-gradient(90deg,#7395ca,#4873b3 55%,#3d639d);"></div>
<div class="a" style="left:591.46px;top:272.9px;width:3.2px;height:22.4px;background:linear-gradient(90deg,#eef0f3,#d8dce2);border:.5px solid #a3a8b0;border-bottom:none"></div>
<div class="a" style="left:309px;top:294.7px;width:287px;height:0.9px;background:#222;"></div>
<div class="t" style="right:452.7px;top:298px;font-size:6.700px;font-style:italic;color:#1a1a1a;transform-origin:100% 0;transform:rotate(-56deg) scaleX(.76)">England (UK)</div>
<div class="t" style="right:442.09px;top:298px;font-size:6.700px;font-style:italic;color:#1a1a1a;transform-origin:100% 0;transform:rotate(-56deg) scaleX(.76)">Austria</div>
<div class="t" style="right:431.48px;top:298px;font-size:6.700px;font-style:italic;color:#1a1a1a;transform-origin:100% 0;transform:rotate(-56deg) scaleX(.76)">Denmark</div>
<div class="t" style="right:420.87px;top:298px;font-size:6.700px;font-style:italic;color:#1a1a1a;transform-origin:100% 0;transform:rotate(-56deg) scaleX(.76)">Australia</div>
<div class="t" style="right:410.26px;top:298px;font-size:6.700px;font-style:italic;color:#1a1a1a;transform-origin:100% 0;transform:rotate(-56deg) scaleX(.76)">Italy</div>
<div class="t" style="right:399.65px;top:298px;font-size:6.700px;font-style:italic;color:#1a1a1a;transform-origin:100% 0;transform:rotate(-56deg) scaleX(.76)">Ireland</div>
<div class="t" style="right:389.04px;top:298px;font-size:6.700px;font-style:italic;color:#1a1a1a;transform-origin:100% 0;transform:rotate(-56deg) scaleX(.76)">United States</div>
<div class="t" style="right:378.43px;top:298px;font-size:6.700px;font-style:italic;color:#1a1a1a;transform-origin:100% 0;transform:rotate(-56deg) scaleX(.76)">Flanders (Belgium)</div>
<div class="t" style="right:367.82px;top:298px;font-size:6.700px;font-style:italic;color:#1a1a1a;transform-origin:100% 0;transform:rotate(-56deg) scaleX(.76)">Netherlands</div>
<div class="t" style="right:357.21px;top:298px;font-size:6.700px;font-style:italic;color:#1a1a1a;transform-origin:100% 0;transform:rotate(-56deg) scaleX(.76)">French Community (Belgium)</div>
<div class="t" style="right:346.6px;top:298px;font-size:6.700px;font-style:italic;color:#1a1a1a;transform-origin:100% 0;transform:rotate(-56deg) scaleX(.76)">Iceland</div>
<div class="t" style="right:335.99px;top:298px;font-size:6.700px;font-style:italic;color:#1a1a1a;transform-origin:100% 0;transform:rotate(-56deg) scaleX(.76)">Norway</div>
<div class="t" style="right:325.38px;top:298px;font-size:6.700px;font-style:italic;color:#1a1a1a;transform-origin:100% 0;transform:rotate(-56deg) scaleX(.76)">Israel</div>
<div class="t" style="right:314.77px;top:298px;font-size:6.700px;font-style:italic;color:#1a1a1a;transform-origin:100% 0;transform:rotate(-56deg) scaleX(.76)">New Zealand</div>
<div class="t" style="right:304.16px;top:298px;font-size:6.700px;font-style:italic;color:#1a1a1a;transform-origin:100% 0;transform:rotate(-56deg) scaleX(.76)">Finland</div>
<div class="t" style="right:293.55px;top:298px;font-size:6.700px;font-style:italic;color:#1a1a1a;transform-origin:100% 0;transform:rotate(-56deg) scaleX(.76)">OECD average</div>
<div class="t" style="right:282.94px;top:298px;font-size:6.700px;font-style:italic;color:#1a1a1a;transform-origin:100% 0;transform:rotate(-56deg) scaleX(.76)">France</div>
<div class="t" style="right:272.33px;top:298px;font-size:6.700px;font-style:italic;color:#1a1a1a;transform-origin:100% 0;transform:rotate(-56deg) scaleX(.76)">Sweden</div>
<div class="t" style="right:261.72px;top:298px;font-size:6.700px;font-style:italic;color:#1a1a1a;transform-origin:100% 0;transform:rotate(-56deg) scaleX(.76)">Costa Rica</div>
<div class="t" style="right:251.11px;top:298px;font-size:6.700px;font-style:italic;color:#1a1a1a;transform-origin:100% 0;transform:rotate(-56deg) scaleX(.76)">Portugal</div>
<div class="t" style="right:240.5px;top:298px;font-size:6.700px;font-style:italic;color:#1a1a1a;transform-origin:100% 0;transform:rotate(-56deg) scaleX(.76)">Slovenia</div>
<div class="t" style="right:229.89px;top:298px;font-size:6.700px;font-style:italic;color:#1a1a1a;transform-origin:100% 0;transform:rotate(-56deg) scaleX(.76)">Chile</div>
<div class="t" style="right:219.28px;top:298px;font-size:6.700px;font-style:italic;color:#1a1a1a;transform-origin:100% 0;transform:rotate(-56deg) scaleX(.76)">Czech Republic</div>
<div class="t" style="right:208.67px;top:298px;font-size:6.700px;font-style:italic;color:#1a1a1a;transform-origin:100% 0;transform:rotate(-56deg) scaleX(.76)">Poland</div>
<div class="t" style="right:198.06px;top:298px;font-size:6.700px;font-style:italic;color:#1a1a1a;transform-origin:100% 0;transform:rotate(-56deg) scaleX(.76)">Greece</div>
<div class="t" style="right:187.45px;top:298px;font-size:6.700px;font-style:italic;color:#1a1a1a;transform-origin:100% 0;transform:rotate(-56deg) scaleX(.76)">Latvia</div>
<div class="t" style="right:176.84px;top:298px;font-size:6.700px;font-style:italic;color:#1a1a1a;transform-origin:100% 0;transform:rotate(-56deg) scaleX(.76)">Estonia</div>
<div class="a" style="left:242.3px;top:355.5px;width:394.5px;height:16.8px;background:#d3d7de;"></div>
<div class="a" style="left:570px;top:355px;width:48px;height:17px;border-radius:24px/3.500px;background:linear-gradient(90deg,#7d91b6,#bcc9e0 45%,#9aaccc 75%,#7489b0)"></div>
<div class="a" style="left:570px;top:355px;width:48px;height:6px;border-radius:50%;background:#aebcd6"></div>
<div class="t" style="left:588px;top:359.6px;font-size:9.8px;color:#10141f;font-weight:bold">6.</div>
<svg class="a" style="left:604px;top:163px" width="9" height="11" viewBox="0 0 9 11"><path d="M3 0v4M1 2h4M6 4v5M4.500 5.500h3.500M4 9l3 2" stroke="#333" stroke-width="1" fill="none"/></svg>
<div class="a" style="left:0px;top:400px;width:765px;height:10px;background:#f2f2f2;"></div>
<div class="t" style="left:5px;top:402.85px;font-size:5.3px;color:#666;">Слайд 6 из 22</div>
<div class="a" style="left:42.5px;top:403px;width:5px;height:5px;background:transparent;border:.5px solid #888"></div>
<div class="t" style="left:52px;top:402.85px;font-size:5.3px;color:#666;">русский</div>
<div class="t" style="left:524px;top:402.7px;font-size:5.2px;color:#666;">≙ Заметки</div>
<div class="t" style="left:558px;top:402.7px;font-size:5.2px;color:#666;">■ Примечания</div>
<div class="a" style="left:604px;top:401px;width:14px;height:9px;background:#d4d4d4;"></div>
<div class="a" style="left:608px;top:403.5px;width:6px;height:0.7px;background:#666;"></div>
<div class="a" style="left:608px;top:405.3px;width:6px;height:0.7px;background:#666;"></div>
<div class="a" style="left:608px;top:407.1px;width:6px;height:0.7px;background:#666;"></div>
<div class="a" style="left:625px;top:403px;width:5.5px;height:5px;background:transparent;border:.6px dotted #888"></div>
<div class="a" style="left:641px;top:403px;width:5px;height:4.5px;background:#999;"></div>
<div class="a" style="left:656px;top:403px;width:6px;height:3.5px;background:#999;"></div>
<div class="a" style="left:658.5px;top:406.5px;width:1px;height:2px;background:#999;"></div>
<div class="t" style="left:671px;top:402.5px;font-size:6px;color:#555;">−</div>
<div class="a" style="left:677px;top:405.3px;width:50px;height:0.7px;background:#aaa;"></div>
<div class="a" style="left:695.5px;top:403px;width:1.5px;height:5px;background:#555;"></div>
<div class="t" style="left:728.5px;top:402.5px;font-size:6px;color:#555;">+</div>
<div class="t" style="left:738px;top:402.9px;font-size:5.2px;color:#555;">63 %</div>
<div class="a" style="left:752.5px;top:403px;width:5.5px;height:5px;background:transparent;border:.6px solid #777"></div>
<div class="a" style="left:0px;top:410px;width:765px;height:21.5px;background:#1a1a1a;"></div>
<svg class="a" style="left:7px;top:415.5px" width="10" height="10" viewBox="0 0 10 10" fill="#ddd"><path d="M0 1.500l4-.6v3.800H0zM4.700.8L10 0v4.700H4.700zM0 5.400h4v3.800l-4-.6zM4.700 5.400H10V10l-5.300-.8z"/></svg>
<div class="a" style="left:24.5px;top:411.5px;width:143px;height:18.5px;background:#f4f4f4;"></div>
<svg class="a" style="left:30px;top:416px" width="9" height="9" viewBox="0 0 9 9"><circle cx="5.500" cy="3.500" r="2.800" stroke="#333" stroke-width=".9" fill="none"/><path d="M3.500 5.500L.5 8.500" stroke="#333" stroke-width="1"/></svg>
<div class="t" style="left:45px;top:416.75px;font-size:7.5px;color:#555;">Поиск</div>
<div class="a" style="left:175px;top:413.5px;width:12px;height:12px;border-radius:50%;background:conic-gradient(from -30deg,#ea4335 0 120deg,#fbbc04 0 240deg,#34a853 0 360deg);"></div>
<div class="a" style="left:178.3px;top:416.8px;width:5.4px;height:5.4px;border-radius:50%;background:#4285f4;border:1px solid #fff"></div>
<div class="a" style="left:198.5px;top:413.5px;width:12px;height:12px;border-radius:50%;background:conic-gradient(from 200deg,#2fc2a0,#1b9de2 40%,#0c59a4 75%,#2fc2a0);"></div>
<div class="a" style="left:200px;top:421px;width:5px;height:4px;background:#e7a32a;border-radius:1px"></div>
<div class="a" style="left:224px;top:414px;width:12px;height:11px;background:#c9b49a;border-radius:1px"></div>
<div class="a" style="left:226px;top:417px;width:8px;height:6px;background:#3a2a22;"></div>
<div class="a" style="left:249px;top:415px;width:12px;height:9px;background:#f7c948;border-radius:1px"></div>
<div class="a" style="left:249px;top:418px;width:12px;height:6px;background:#fbdc6a;"></div>
<div class="a" style="left:252px;top:420px;width:6px;height:3px;background:#3a8ee6;"></div>
<div class="a" style="left:247.5px;top:428.5px;width:15px;height:1.5px;background:#8ab4e8;"></div>
<div class="a" style="left:273.5px;top:413.5px;width:13px;height:12px;background:#2d8cff;border-radius:4px"></div>
<div class="t" style="left:275.5px;top:417.7px;font-size:3.6px;color:#fff;font-weight:bold">zoom</div>
<div class="a" style="left:298.5px;top:413.5px;width:10.500px;height:12px;border-radius:50%;border:2.600px solid #e5222b"></div>
<div class="a" style="left:324px;top:413.5px;width:12px;height:12px;border-radius:50%;background:#7b5cd6;"></div>
<div class="a" style="left:326.7px;top:415.7px;width:6.6px;height:6.6px;border-radius:50%;background:#fff;"></div>
<div class="a" style="left:328.7px;top:417.2px;width:3.6px;height:3.6px;border-radius:50%;background:#7b5cd6;"></div>
<div class="a" style="left:349px;top:413.5px;width:12px;height:12px;border-radius:50%;background:#2aa3e0;"></div>
<svg class="a" style="left:351px;top:416.5px" width="8" height="7" viewBox="0 0 8 7"><path d="M0 3.200L8 0 6.500 7 4 5 3 6.500 2.500 4.300z" fill="#fff"/></svg>
<div class="a" style="left:374px;top:414px;width:10px;height:10px;background:#5059c9;border-radius:2px"></div>
<div class="a" style="left:380.8px;top:413.8px;width:4.4px;height:4.4px;border-radius:50%;background:#7b83eb;"></div>
<div class="a" style="left:380.0px;top:421.0px;width:5.0px;height:5.0px;border-radius:50%;background:#e03a3a;"></div>
<div class="t" style="left:376px;top:416.0px;font-size:6px;color:#fff;font-weight:bold">T</div>
<div class="a" style="left:399px;top:415px;width:10px;height:9px;background:#3a3a3a;border-radius:1px"></div>
<div class="t" style="left:402px;top:417.25px;font-size:4.5px;color:#aaa;">K</div>
<div class="a" style="left:368px;top:428.5px;width:20px;height:1.5px;background:#8ab4e8;"></div>
<div class="a" style="left:417px;top:410px;width:23px;height:20px;background:#3d3d3d;"></div>
<div class="a" style="left:423.5px;top:413.5px;width:12px;height:12px;background:#d24726;border-radius:1px"></div>
<div class="t" style="left:427px;top:416.0px;font-size:7px;color:#fff;font-weight:bold">P</div>
<div class="a" style="left:419px;top:428.5px;width:21px;height:1.6px;background:#8ab4e8;"></div>
<div class="a" style="left:551px;top:415.5px;width:14px;height:8px;border-radius:6px 7px 3px 3px;background:linear-gradient(180deg,#eef3fb,#b9cdee)"></div>
<div class="t" style="left:568px;top:416.6px;font-size:6.8px;color:#e6e6e6;">4°C&nbsp; Cloudy</div>
<div class="t" style="left:615px;top:416.0px;font-size:7px;color:#ddd;">^</div>
<div class="a" style="left:631px;top:416px;width:7px;height:6px;background:transparent;border:.8px solid #ddd"></div>
<div class="a" style="left:635.5px;top:420.5px;width:3.0px;height:3.0px;border-radius:50%;background:#f2a33a;"></div>
<div class="a" style="left:643.5px;top:415.5px;width:4px;height:7px;background:transparent;border:.7px solid #bbb"></div>
<div class="a" style="left:655px;top:417px;width:7px;height:4px;background:#ddd;"></div>
<svg class="a" style="left:666px;top:415.5px" width="8" height="8" viewBox="0 0 8 8" fill="none" stroke="#ccc" stroke-width=".8"><path d="M1 7a6 6 0 0 1 6-6M3 7a4 4 0 0 1 4-4M5 7a2 2 0 0 1 2-2"/></svg>
<div class="t" style="left:677px;top:416.8px;font-size:6px;color:#ccc;">⊲×</div>
<div class="t" style="left:689px;top:417.25px;font-size:5.5px;color:#e6e6e6;">РУС</div>
<div class="t" style="left:712.5px;top:413.2px;font-size:5.2px;color:#e6e6e6;">14:06</div>
<div class="t" style="left:707px;top:421.2px;font-size:5.2px;color:#e6e6e6;">16.11.2023</div>
<div class="a" style="left:744px;top:415.5px;width:8px;height:6.5px;background:#e6e6e6;border-radius:1px"></div>
<div class="a" style="left:745.5px;top:417.5px;width:5px;height:0.7px;background:#333;"></div>
<div class="a" style="left:745.5px;top:419.3px;width:5px;height:0.7px;background:#333;"></div>
<div class="a" style="left:762px;top:412px;width:0.6px;height:18px;background:#555;"></div>
</div></div>
<!--/PPT-->

<!--OV-->
<div class="a" style="left:13px;top:403px;width:214px;height:24px;border-radius:4px;background:rgba(30,30,30,.8)"></div>
<div class="t" style="left:19.500px;top:408.500px;font-size:13px;color:#fff;transform-origin:0 0;transform:scaleX(.922)">Володимир Андрійович Мандрагеля</div>
<div class="a" style="left:235px;top:403px;width:66px;height:23.500px;border-radius:4px;background:rgba(112,112,112,.93)"></div>
<div class="a" style="left:246px;top:414.300px;width:13px;height:1.200px;background:#e4e4e4"></div>
<div class="a" style="left:276.500px;top:414.300px;width:13px;height:1.200px;background:#e4e4e4"></div>
<div class="a" style="left:282.400px;top:408.400px;width:1.200px;height:13px;background:#e4e4e4"></div>
<!--/OV-->
<!--SIDE-->
<div class="a" style="left:1040px;top:24px;width:156px;height:85.5px;border-radius:7px;background:#7b83eb"><div class="a" style="left:3.500px;top:3.500px;width:149px;height:78.500px;border-radius:3px;overflow:hidden;background:#b9a27c"><div class="a" style="left:0px;top:0px;width:150px;height:79px;background:linear-gradient(90deg,#8c7e68 0px,#a39478 8px,#9a8b70 17px,#a4926c 24px,#a68c58 30px,#9a8556 36px,#8a7a60 42px,#7d7060 46px,#6a6058 47.500px,#dcdcde 48.500px,#e8e8ea 57.500px,#57525e 59px,#4a4654 74px,#9e998f 75px,#aaa59a 88px,#c2bba5 90px,#c8c1aa 149px)"></div><div class="a" style="left:59.5px;top:12px;width:15px;height:40px;border:1.600px solid #d6d6da;border-right-width:1.200px;background:#4f4a5a;filter:blur(.5px)"></div><div class="a" style="left:61px;top:14px;width:12px;height:30px;background:linear-gradient(180deg,#5a5566,#3c3846)"></div><div class="a" style="left:75px;top:0px;width:16px;height:79px;background:linear-gradient(90deg,#b5b0a4,#a09b8f 50%,#beb8a4);filter:blur(.4px)"></div><div class="a" style="left:82px;top:0px;width:1.2px;height:50px;background:#8f8a80;filter:blur(.4px)"></div><div class="a" style="left:90px;top:0px;width:60px;height:79px;background:linear-gradient(180deg,#cac3ac 0%,#c6bfa7 50%,#b9ad8f 56%,#b3a483 100%)"></div><div class="a" style="left:75px;top:0px;width:75px;height:14px;background:linear-gradient(180deg,#d8d4c6,#cfcabb);clip-path:polygon(0 0,100% 0,100% 45%,20% 100%)"></div><div class="a" style="left:133px;top:0px;width:1px;height:79px;background:#8c877a;filter:blur(.5px);opacity:.7;transform:rotate(4deg)"></div><div class="a" style="left:140px;top:38px;width:9px;height:40px;background:#6c6a60;filter:blur(1.500px);opacity:.65"></div><div class="a" style="left:17px;top:12px;width:17px;height:8px;background:#dedee6;filter:blur(1px);transform:rotate(13deg)"></div><div class="a" style="left:33px;top:18px;width:9px;height:42px;background:#b8933c;filter:blur(1.300px);opacity:.85"></div><div class="a" style="left:9px;top:8px;width:2px;height:60px;background:#c8c2b4;filter:blur(1px);opacity:.6;transform:rotate(3deg)"></div><div class="a" style="left:0px;top:55px;width:48px;height:24px;background:linear-gradient(180deg,#806650,#73583f);filter:blur(1px)"></div><div class="a" style="left:34px;top:59px;width:12px;height:16px;background:#8a372a;filter:blur(1.300px)"></div><div class="a" style="left:30px;top:72px;width:12px;height:7px;background:#c9c4bc;filter:blur(1px);opacity:.7"></div><div class="a" style="left:86px;top:44px;width:22px;height:26px;background:#1f2028;border-radius:5px 7px 3px 3px;filter:blur(.8px)"></div><div class="a" style="left:42px;top:58px;width:73px;height:24px;background:#1b1c23;border-radius:28px 36px 0 0;filter:blur(.9px)"></div><div class="a" style="left:59px;top:27px;width:30px;height:22px;background:#1c1b20;border-radius:13px 15px 9px 6px;filter:blur(.8px)"></div><div class="a" style="left:59px;top:34px;width:26px;height:33px;background:linear-gradient(180deg,#c49886,#b58877);border-radius:8px 9px 11px 12px;filter:blur(.9px)"></div><div class="a" style="left:79px;top:36px;width:8px;height:14px;background:#2a2326;border-radius:3px;filter:blur(.9px)"></div><div class="a" style="left:59px;top:39.5px;width:21px;height:1.5px;background:#d6d2ce;opacity:.45;filter:blur(.6px)"></div><div class="a" style="left:62px;top:64px;width:24px;height:16px;background:#15161c;border-radius:5px;filter:blur(.8px)"></div></div></div>
<div class="a" style="left:1040px;top:113.3px;width:156px;height:86px;border-radius:7px;overflow:hidden;box-shadow:inset 0 0 0 1px #3a3a3a"><div class="a" style="left:0px;top:0px;width:156px;height:86px;background:radial-gradient(ellipse at 10% 95%,#1f3a3d 0%,rgba(31,58,61,0) 70%),radial-gradient(ellipse at 95% 35%,#3b2f2b 0%,rgba(59,47,43,0) 60%),linear-gradient(180deg,#363332,#2c3132)"></div><div class="a" style="left:53.500px;top:19px;width:48px;height:48px;border-radius:50%;overflow:hidden"><div class="a" style="left:0px;top:0px;width:48px;height:48px;background:linear-gradient(180deg,#444822 0%,#54532a 42%,#a38e66 50%,#ad976e 100%)"></div><div class="a" style="left:17px;top:3px;width:15px;height:15px;background:#d4c4b6;border-radius:50%;filter:blur(.6px)"></div><div class="a" style="left:19px;top:7px;width:10px;height:11px;background:#c39a86;border-radius:50%;filter:blur(.6px)"></div><div class="a" style="left:15px;top:10px;width:6px;height:14px;background:#8a6458;border-radius:3px;filter:blur(.7px)"></div><div class="a" style="left:8px;top:20px;width:30px;height:16px;background:#cdc5be;border-radius:8px 10px 4px 4px;filter:blur(.8px)"></div><div class="a" style="left:30px;top:14px;width:12px;height:9px;background:#d2c8c0;border-radius:5px;filter:blur(.8px);transform:rotate(-25deg)"></div><div class="a" style="left:16px;top:30px;width:17px;height:20px;background:#cfc8c2;border-radius:3px;filter:blur(.7px)"></div><div class="a" style="left:21px;top:24px;width:3px;height:22px;background:#a79e98;filter:blur(.6px)"></div></div><div class="a" style="left:2.500px;top:60px;width:28px;height:24px;border-radius:4px;background:#131d1e"><svg class="a" style="left:6px;top:4px" width="16" height="16" viewBox="0 0 16 16" fill="none" stroke="#e6e6e6" stroke-width="1"><rect x="6" y="2" width="4.400" height="7.500" rx="2.200" fill="#e6e6e6" stroke="none"/><path d="M4 7.500a4.200 4.200 0 0 0 8.400 0M8.200 12v2.200" stroke-linecap="round"/><path d="M2 1.500l12 13" stroke="#131d1e" stroke-width="2.600"/><path d="M2 1.500l12 13" stroke-width="1.100"/></svg></div><div class="a" style="left:0;top:0;width:156px;height:86px;border-radius:7px;box-shadow:inset 0 0 0 1px rgba(80,80,80,.55)"></div></div>
<div class="a" style="left:1040px;top:204.5px;width:156px;height:85px;border-radius:7px;overflow:hidden"><div class="a" style="left:0px;top:0px;width:156px;height:85px;background:radial-gradient(ellipse at 15% 20%,#3a332e 0%,rgba(58,51,46,0) 65%),radial-gradient(ellipse at 85% 90%,#263334 0%,rgba(38,51,52,0) 60%),linear-gradient(180deg,#302e2d,#2c2f30)"></div><div class="a" style="left:53.500px;top:18px;width:48px;height:48px;border-radius:50%;background:#fbe3cf"></div><div class="t" style="left:77.500px;top:33px;font-size:18px;font-weight:bold;color:#8e5a1c;transform:translateX(-50%) scaleX(1.020)">НШ</div><div class="a" style="left:2.500px;top:59px;width:28px;height:24px;border-radius:4px;background:#151515"><svg class="a" style="left:6px;top:4px" width="16" height="16" viewBox="0 0 16 16" fill="none" stroke="#e6e6e6" stroke-width="1"><rect x="6" y="2" width="4.400" height="7.500" rx="2.200" fill="#e6e6e6" stroke="none"/><path d="M4 7.500a4.200 4.200 0 0 0 8.400 0M8.200 12v2.200" stroke-linecap="round"/><path d="M2 1.500l12 13" stroke="#151515" stroke-width="2.600"/><path d="M2 1.500l12 13" stroke-width="1.100"/></svg></div><div class="a" style="left:0;top:0;width:156px;height:85px;border-radius:7px;box-shadow:inset 0 0 0 1px rgba(80,80,80,.55)"></div></div>
<svg class="a" style="left:1082.5px;top:304px" width="8" height="12" viewBox="0 0 8 12"><path d="M6.500 1L1.500 6l5 5" stroke="#6a6a6a" stroke-width="1.300" fill="none"/></svg>
<div class="t" style="left:1118.3px;top:302.5px;font-size:15px;font-weight:bold;color:#fff;transform:translateX(-50%) scaleX(.93)">1/10</div>
<svg class="a" style="left:1144px;top:304px" width="8" height="12" viewBox="0 0 8 12"><path d="M1.500 1l5 5-5 5" stroke="#e6e6e6" stroke-width="1.400" fill="none"/></svg>
<div class="a" style="left:1039.5px;top:329.5px;width:156.5px;height:86.5px;border-radius:6px;overflow:hidden;background:#bbb"><div class="a" style="left:0px;top:0px;width:157px;height:87px;background:linear-gradient(90deg,#b1b1b6 0%,#b9b9bd 30%,#c6c4c2 45%,#d5d3d0 62%,#dedddb 80%,#d9d9d8 100%)"></div><div class="a" style="left:58px;top:18px;width:36px;height:45px;background:#d6cdbb;filter:blur(2px)"></div><div class="a" style="left:92px;top:0px;width:12px;height:24px;background:#a89668;filter:blur(2.500px);opacity:.8"></div><div class="a" style="left:124px;top:8px;width:11px;height:42px;background:#b48c58;filter:blur(2.500px);opacity:.85"></div><div class="a" style="left:132px;top:26px;width:12px;height:12px;background:#3a3c3c;border-radius:50%;filter:blur(2px)"></div><div class="a" style="left:108px;top:58px;width:11px;height:14px;background:#5a5f62;border-radius:50%;filter:blur(2.500px);opacity:.8"></div><div class="a" style="left:134px;top:70px;width:14px;height:9px;background:#54595c;border-radius:50%;filter:blur(2.500px);opacity:.8"></div><div class="a" style="left:106px;top:32px;width:8px;height:20px;background:#9a9ea2;filter:blur(2.500px);opacity:.7"></div><div class="a" style="left:140px;top:40px;width:17px;height:40px;background:#e9eaec;filter:blur(2.500px);opacity:.8"></div><div class="a" style="left:50px;top:53px;width:56px;height:26px;background:#9c6a46;border-radius:12px 14px 0 0;filter:blur(2.200px)"></div><div class="a" style="left:44px;top:67px;width:69px;height:24px;background:#79843c;border-radius:26px 30px 0 0;filter:blur(1.200px)"></div><div class="a" style="left:66px;top:62px;width:25px;height:12px;background:#75813a;border-radius:5px;filter:blur(1px)"></div><div class="a" style="left:64px;top:31px;width:26px;height:22px;background:#cdbd9e;border-radius:13px 13px 8px 8px;filter:blur(1.200px)"></div><div class="a" style="left:66px;top:38px;width:22px;height:28px;background:linear-gradient(180deg,#cdaa98,#c39c8a);border-radius:9px 9px 11px 11px;filter:blur(1px)"></div><div class="a" style="left:66px;top:44.5px;width:10px;height:5.5px;border:1.300px solid #3a3432;border-radius:2px;background:rgba(120,130,125,.5);filter:blur(.6px)"></div><div class="a" style="left:78px;top:44.5px;width:10px;height:5.5px;border:1.300px solid #3a3432;border-radius:2px;background:rgba(120,130,125,.5);filter:blur(.6px)"></div><div class="a" style="left:72px;top:57px;width:10px;height:1.5px;background:#9c6a60;filter:blur(.8px);opacity:.6"></div></div>
<!--/SIDE-->
    </div>
  </div>
</div>


<!--STRIP-->
<div class="a" style="left:0;top:666px;width:1280px;height:14px;background:#fff;overflow:hidden">
  <div class="a" style="left:10px;top:-6px;width:46px;height:20px;border-radius:40%;background:#f2ee3a;filter:blur(.6px)"></div>
  <div class="a" style="left:10px;top:0;width:42px;height:9px;background:#4a8fd8;border-radius:2px;filter:blur(.5px)"></div>
  <div class="a" style="left:16px;top:3px;width:30px;height:3px;background:#e9e9a0;filter:blur(.6px)"></div>
  <div class="a" style="left:72px;top:5px;width:11px;height:10px;background:#8a8a8a;border-radius:3px;filter:blur(.6px)"></div>
  <div class="a" style="left:86px;top:0;width:12px;height:12px;background:#5a4a42;filter:blur(.6px)"></div>
  <div class="a" style="left:90px;top:1px;width:6px;height:8px;background:#d8dde8;filter:blur(.5px)"></div>
  <div class="a" style="left:110px;top:1px;width:14px;height:11px;background:#e0453a;border-radius:40%;filter:blur(.7px);transform:rotate(-35deg)"></div>
  <div class="a" style="left:114px;top:0;width:8px;height:6px;background:#9ab8e8;border-radius:40%;filter:blur(.7px)"></div>
  <div class="t" style="left:128px;top:6px;font-size:15.500px;color:#a6a6a6;transform-origin:0 0;transform:scaleX(.85)">Як виводити стартапи на</div>
  <div class="a" style="left:308px;top:2px;width:17px;height:17px;border-radius:50%;background:#9a9a9a"></div>
  <div class="t" style="left:313px;top:5px;font-size:11px;color:#fff;font-weight:bold">?</div>
  <div class="a" style="left:336px;top:0;width:1px;height:14px;background:#d0d0d0"></div>
  <div class="a" style="left:1275px;top:0;width:5px;height:14px;background:#8aa393"></div>
</div>
<!--/STRIP-->
<div id="task" class="a">
<!--TASK-->
<svg class="a" style="left:16px;top:13px" width="17" height="17" viewBox="0 0 17 17" fill="#fff"><path d="M0 2.400l6.900-1v6.700H0zM7.800 1.300L17 0v8.100H7.800zM0 9h6.900v6.700l-6.900-1zM7.800 9H17v8l-9.200-1.300z"/></svg>
<div class="a" style="left:48px;top:1px;width:288.5px;height:39px;background:#f1f1f1"></div>
<svg class="a" style="left:59px;top:11px" width="19" height="19" viewBox="0 0 19 19"><circle cx="11.500" cy="7" r="5.500" stroke="#2a2a2a" stroke-width="1.500" fill="none"/><path d="M7.500 11L1 17.500" stroke="#2a2a2a" stroke-width="1.700"/></svg>
<div class="t" style="left:88px;top:14px;font-size:15.500px;color:#333">Пошук</div>
<svg class="a" style="left:262px;top:8px" width="75" height="32" viewBox="0 0 75 32"><path d="M3 32c2-8 5-14 10-17 3-2 5-1 8 0 3-5 8-7 14-7h22c6 1 10 5 12 10 3 4 5 9 6 14z" fill="#9a8c74"/><path d="M8 32c1-6 4-11 8-13 4 3 8 3 12 1 4 3 9 4 14 3 6 2 12 2 18 0 6 2 10 5 13 9z" fill="#7f7a63"/><path d="M0 32c4-4 9-6 15-5 5-3 11-2 15 1 6-3 13-3 19 0 7-2 15-1 22 4z" fill="#6f8a4a"/><path d="M36 14h23v-6.500l-11.500-3.500L36 7.500z" fill="#e8dcc2"/><path d="M36 7.500l11.500-3.500 11.500 3.500z" fill="#d8c8a8"/><rect x="37.0" y="8.300" width="1.300" height="5.700" fill="#b8a888"/><rect x="40.3" y="8.300" width="1.300" height="5.700" fill="#b8a888"/><rect x="43.6" y="8.300" width="1.300" height="5.700" fill="#b8a888"/><rect x="46.9" y="8.300" width="1.300" height="5.700" fill="#b8a888"/><rect x="50.2" y="8.300" width="1.300" height="5.700" fill="#b8a888"/><rect x="53.5" y="8.300" width="1.300" height="5.700" fill="#b8a888"/><rect x="56.8" y="8.300" width="1.300" height="5.700" fill="#b8a888"/><rect x="17" y="13" width="11" height="6" fill="#cdbf9f"/><path d="M16 13l6.500-3 6.500 3z" fill="#bfae8c"/><rect x="10" y="19" width="7" height="7" fill="#b0a084"/><rect x="24" y="21" width="9" height="6" fill="#a89878"/></svg>
<svg class="a" style="left:348px;top:9px" width="22" height="24" viewBox="0 0 22 24" fill="none" stroke="#e6e6e6" stroke-width="1.300"><rect x="3" y="5.500" width="12" height="12"/><path d="M3 2.500h12M3 20.500h12M19.500 2v6M19.500 12.500v9"/><circle cx="19.500" cy="10.200" r=".9" fill="#e6e6e6"/></svg>
<div class="a" style="left:400px;top:10px;width:22px;height:22px;background:#f6f6f6;border-radius:2px"></div>
<svg class="a" style="left:404px;top:5px" width="14" height="8" viewBox="0 0 14 8"><path d="M2 8V4.500a5 4 0 0 1 10 0V8" stroke="#3a9be0" stroke-width="1.500" fill="none"/></svg>
<div class="a" style="left:405px;top:16px;width:5.5px;height:5.5px;background:#f25022"></div>
<div class="a" style="left:411.5px;top:16px;width:5.5px;height:5.5px;background:#7fba00"></div>
<div class="a" style="left:405px;top:22.5px;width:5.5px;height:5.5px;background:#00a4ef"></div>
<div class="a" style="left:411.5px;top:22.5px;width:5.5px;height:5.5px;background:#ffb900"></div>
<svg class="a" style="left:448px;top:9px" width="26" height="24" viewBox="0 0 26 24"><path d="M1 9L13 1l12 8v13H1z" fill="#1976d2"/><path d="M3 8h20v10H3z" fill="#9fd3f7"/><path d="M1 9.500l12 8 12-8V23H1z" fill="#2ea3f2"/><path d="M1 23l9.500-8M25 23l-9.500-8" stroke="#1a86d9" stroke-width="1"/></svg>
<div class="a" style="left:487.5px;top:0px;width:48.5px;height:40px;background:#9a5a2b"></div>
<div class="a" style="left:487.5px;top:38px;width:48.5px;height:2px;background:#f07a26"></div>
<div class="a" style="left:499.5px;top:7.5px;width:23.0px;height:23.0px;border-radius:50%;background:#2ca5e0;"></div>
<svg class="a" style="left:503px;top:12px" width="15" height="13" viewBox="0 0 15 13"><path d="M0 6L15 0l-2.800 13-4.700-3.500-2.300 2.300-.5-4z" fill="#fff"/><path d="M4.700 7.800L12 2.500 7.500 9.500" fill="#c8daea"/></svg>
<div class="a" style="left:510px;top:25px;width:20px;height:11px;background:#e53935;border-radius:2px"><div class="t" style="left:1.500px;top:1.200px;font-size:9.500px;font-weight:bold;color:#fff;transform-origin:0 0;transform:scaleX(.95)">485</div></div>
<svg class="a" style="left:549px;top:9px" width="25" height="22" viewBox="0 0 25 22"><path d="M0 2h9l2 2.500h13V21H0z" fill="#e9a824"/><path d="M0 6h25v15H0z" fill="#fbd45c"/><path d="M4 12h17v9H4z" fill="#3b8fe0"/><path d="M8 16h9v5H8z" fill="#fbd45c"/></svg>
<div class="a" style="left:599.5px;top:8px;width:24px;height:24px;border-radius:50%;background:#0b5cff;"></div>
<div class="t" style="left:602.500px;top:16px;font-size:7.500px;font-weight:bold;color:#fff;letter-spacing:-.2px">zoom</div>
<div class="a" style="left:649px;top:8px;width:24px;height:24px;border-radius:50%;background:conic-gradient(from 200deg,#0c59a4 0deg,#1687d9 80deg,#2cc3d4 150deg,#45d07c 200deg,#38c0a0 250deg,#1b8fe0 310deg,#0c59a4 360deg);"></div>
<svg class="a" style="left:649px;top:8px" width="24" height="24" viewBox="0 0 24 24"><path d="M23.500 14.500c0 3-2.500 4.500-5 4.500-4 0-7-2.500-7-5.500 0-1.500.8-2.500 1.800-3-3.300.2-6 2.800-6 6.200 0 4 3.500 7 8 7 5 0 8.200-4.200 8.200-9.200z" fill="#0d4a8c"/><path d="M11.500 13.500c0-1.800 1.200-3.300 3-3.300 2.500 0 3.500 2 3.200 3.800h-6z" fill="#0f1f3a" opacity=".0"/><path d="M2.500 12C3 7 7 3.500 12 3.500c5.500 0 9 3.800 9.500 8-1-2.300-4-4-7.500-4-5 0-8.500 3-8.500 7.500 0 1 .2 2 .6 3C4 16.500 2.300 14.500 2.500 12z" fill="#3fd0b0" opacity=".55"/></svg>
<svg class="a" style="left:699px;top:7px" width="25" height="27" viewBox="0 0 25 27"><path d="M12.500 1C6 1 1.500 4 1.500 11c0 4 1.500 7 4 8.500V25l4-3.500c1 .2 2 .3 3 .3 6.500 0 11-3 11-10.300S19 1 12.500 1z" fill="#7b5cd6" stroke="#e9e3fb" stroke-width="1.600"/><path d="M8.500 7c.5-.6 1.500-.5 2 .2l1 1.600c.3.500.2 1.200-.3 1.600l-.6.500c.5 1.500 1.700 2.800 3.300 3.400l.6-.7c.4-.5 1.100-.6 1.600-.3l1.600 1c.7.500.8 1.400.2 2-.8.900-2 1.300-3.200.9-3.500-1.200-6.200-4-7.200-7.300-.3-1.100.1-2.200 1-2.900z" fill="#fff"/><path d="M13 6.500c2.500.2 4.500 2.200 4.600 4.800M13.300 8.500c1.300.2 2.300 1.200 2.500 2.500" stroke="#fff" stroke-width=".9" fill="none"/></svg>
<div class="a" style="left:737.5px;top:0px;width:48.5px;height:40px;background:#3b3b3b"></div>
<div class="a" style="left:737.5px;top:38px;width:48.5px;height:2px;background:#76b9ed"></div>
<div class="a" style="left:748.0px;top:8.0px;width:23.0px;height:23.0px;border-radius:50%;background:conic-gradient(from -60deg,#ea4335 0 120deg,#fbbc04 0 240deg,#34a853 0 360deg);"></div>
<div class="a" style="left:754.3px;top:14.3px;width:10.4px;height:10.4px;border-radius:50%;background:#4285f4;border:1.600px solid #fff"></div>
<div class="a" style="left:761px;top:19px;width:14px;height:14px;border-radius:50%;background:radial-gradient(circle at 50% 40%,#d7b69a 0 35%,#a9906a 50%,#6b5a3a 75%,#3a3a3a 100%);"></div>
<div class="a" style="left:925px;top:11px;width:26px;height:15px;border-radius:10px 12px 7px 7px;background:linear-gradient(180deg,#f6f9ff,#bcd3f5)"></div>
<div class="a" style="left:928px;top:10px;width:12px;height:12px;border-radius:50%;background:#eef4ff;"></div>
<div class="a" style="left:937.5px;top:9.0px;width:11.0px;height:11.0px;border-radius:50%;background:#e6efff;"></div>
<div class="t" style="left:957px;top:14px;font-size:14.500px;color:#fff">5°C</div>
<svg class="a" style="left:1003.500px;top:15px" width="13" height="9" viewBox="0 0 13 9"><path d="M1 8l5.500-6L12 8" stroke="#f0f0f0" stroke-width="1.300" fill="none"/></svg>
<svg class="a" style="left:1025px;top:12px" width="20" height="18" viewBox="0 0 20 18" fill="none" stroke="#f0f0f0" stroke-width="1.200"><rect x="1" y="1" width="14" height="12" rx="1"/><path d="M5 6a3 3 0 0 1 5-1.500M10 9a3 3 0 0 1-5 0"/><path d="M10 2.500v2H8M5 10.500v-2h2" stroke-width=".9"/><circle cx="14.500" cy="13" r="3.400" fill="#f59b23" stroke="none"/></svg>
<svg class="a" style="left:1048px;top:11px" width="20" height="18" viewBox="0 0 20 18" fill="none" stroke="#f0f0f0" stroke-width="1.100"><path d="M1 6.500h3.500L9 2.500v13L4.500 11.500H1z"/><path d="M11.500 6.500a3.500 3.500 0 0 1 0 5M13.500 4.500a6 6 0 0 1 0 9M15.700 2.800a8.500 8.500 0 0 1 0 12.400" stroke-width="1" opacity=".85"/></svg>
<svg class="a" style="left:1074px;top:11px" width="19" height="18" viewBox="0 0 19 18" fill="none" stroke="#d8d8d8" stroke-width="1.300"><path d="M2 16A14 14 0 0 1 16 2"/><path d="M6 16A10 10 0 0 1 16 6"/><path d="M10 16a6 6 0 0 1 6-6" /><circle cx="15" cy="15.500" r="1.300" fill="#d8d8d8" stroke="none"/></svg>
<svg class="a" style="left:1097px;top:12px" width="22" height="16" viewBox="0 0 22 16"><rect x="3" y="5" width="16" height="9" fill="#f0f0f0"/><rect x="19" y="7.500" width="2" height="4" fill="#f0f0f0"/><path d="M2 1.500v4M5 1.500v4M1 5.500h5v2.500a2.500 2.500 0 0 1-5 0z" stroke="#f0f0f0" stroke-width="1" fill="#101010"/></svg>
<div class="t" style="left:1127px;top:15px;font-size:12.500px;color:#fff;transform-origin:0 0;transform:scaleX(.86)">УКР</div>
<div class="t" style="left:1191px;top:5px;font-size:12.500px;color:#fff;transform:translateX(-50%) scaleX(.96)">14:06</div>
<div class="t" style="left:1191px;top:24px;font-size:12.500px;color:#fff;transform:translateX(-50%) scaleX(.94)">16.11.2023</div>
<svg class="a" style="left:1238px;top:10px" width="20" height="20" viewBox="0 0 20 20"><path d="M1 1h16v12H8l-4 4v-4H1z" fill="#f4f4f4"/><path d="M4 4.500h10M4 7h10M4 9.500h7" stroke="#222" stroke-width=".9"/></svg>
<div class="a" style="left:1247.0px;top:21.0px;width:13.0px;height:13.0px;border-radius:50%;background:#101010;border:1.200px solid #cfcfcf"><div class="t" style="left:2.300px;top:.8px;font-size:10px;color:#fff;font-weight:bold">3</div></div>
<!--/TASK-->
</div>
</body></html>
